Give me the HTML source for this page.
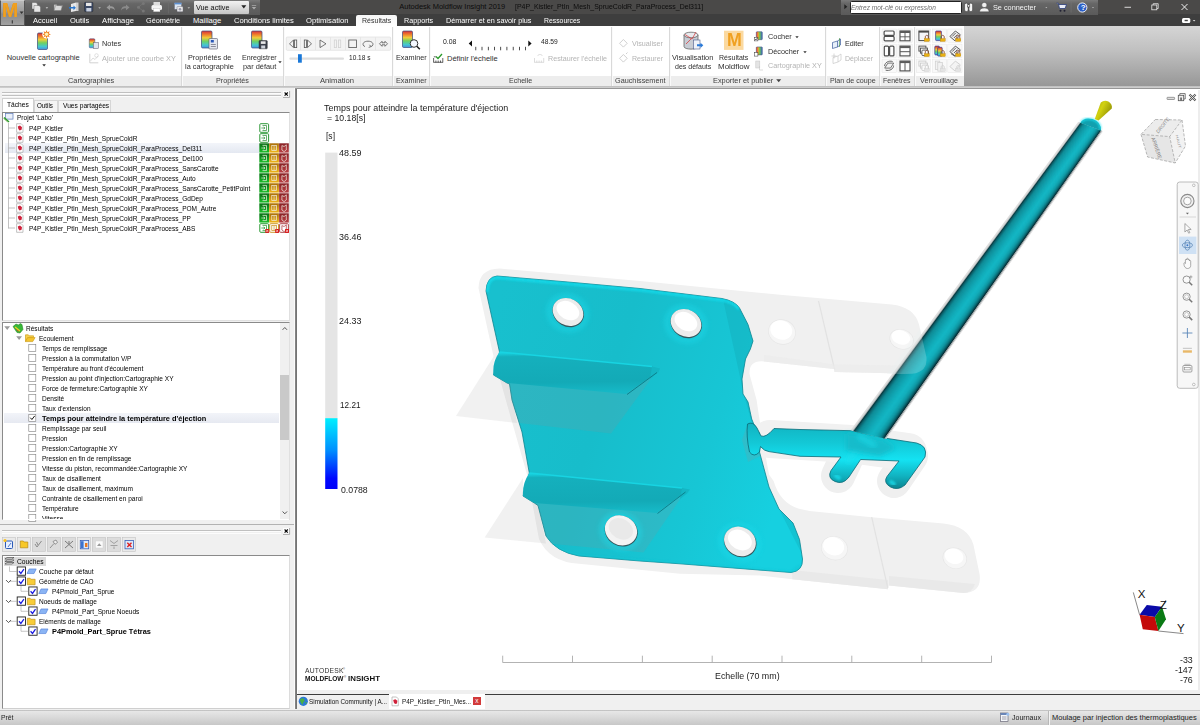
<!DOCTYPE html>
<html lang="fr"><head><meta charset="utf-8"><title>Autodesk Moldflow Insight 2019</title>
<style>
html,body{margin:0;padding:0;}
body{width:1200px;height:725px;overflow:hidden;position:relative;background:#f0f0f0;font-family:"Liberation Sans",sans-serif;}
.t{position:absolute;white-space:nowrap;line-height:1;transform-origin:0 50%;display:block;}
.r{position:absolute;}
svg{position:absolute;overflow:visible;}
</style></head><body>
<div class="r" style="left:0px;top:0px;width:1200px;height:15px;background:#4a4948;"></div>
<div class="r" style="left:0px;top:14.3px;width:1200px;height:11.4px;background:#3e3e3e;"></div>
<div class="r" style="left:25px;top:0px;width:235px;height:14.5px;background:linear-gradient(#7a7a7a,#666 25%,#5a5a5a);"></div>
<div class="r" style="left:0px;top:0px;width:25px;height:26px;background:linear-gradient(#b9b9b9,#9a9a9a 45%,#8a8a8a 55%,#a2a2a2);box-sizing:border-box;border:1px solid #555;border-top-color:#ccc;"></div>
<svg style="left:0;top:0" width="26" height="26" viewBox="0 0 26 26"><path d="M19.6 11.6 h4 l-2 2.4z" fill="#333"/><rect x="11.8" y="20.3" width=".9" height="3.2" fill="#222"/></svg>
<span class="t" style="left:2.30px;top:0.05px;font-size:20.5px;color:#f0a020;font-weight:bold;transform:scaleX(0.949);text-shadow:0 0 .6px #d88610;">M</span>
<svg style="left:0;top:0" width="300" height="15" viewBox="0 0 300 15"><g fill="#e6e6e6" stroke="#555" stroke-width=".4"><path d="M32 2.5h4l1.5 1.5v5h-5.5z"/><path d="M34 5.5h5l1.5 1.5v5h-6.5z"/></g><path d="M45.6 7.2h2.6l-1.3 1.5z" fill="#ccc"/><path d="M54 10.5l1.5-5h7l-1.5 5z M54 10.5v-6h2.5l.8 1h4v1" fill="#d8d8d8" stroke="#777" stroke-width=".5"/><path d="M71 4l5-1.5v8.5l-5 1z" fill="#e8e8e8"/><path d="M76 2.5h2.5v8.5h-2.5z" fill="#cfcfcf"/><path d="M69 7h4.5v-1.6l2.4 2.4-2.4 2.4v-1.6h-4.500z" fill="#2a78d0"/><rect x="84.500" y="2.3" width="8.5" height="9.4" rx="1" fill="#3c4a66" stroke="#222" stroke-width=".4"/><rect x="86" y="2.800" width="5.5" height="3.2" fill="#e8e8e8"/><rect x="86.300" y="8" width="5" height="3.500" fill="#c8d0e0"/><path d="M98.300 7.200h2.600l-1.300 1.500z" fill="#bbb"/><path d="M106.500 7.500l3.500-3v1.800c3.500 0 4.800 1.500 4.800 4.200c-1-1.800-2.300-2.200-4.800-2.200v1.900z" fill="#9a9a9a"/><path d="M129.500 7.500l-3.500-3v1.800c-3.500 0-4.800 1.500-4.800 4.200c1-1.800 2.300-2.200 4.800-2.200v1.900z" fill="#8a8a8a"/><g fill="#777"><circle cx="143.300" cy="3.500" r="1.500"/><circle cx="138.500" cy="7.300" r="1.500"/><circle cx="143.300" cy="11" r="1.500"/><path d="M143.300 3.200l-5 4 5 4" fill="none" stroke="#777" stroke-width=".7"/></g><rect x="151.500" y="5" width="10.500" height="5" rx="1.500" fill="#f4f4f4"/><rect x="153.500" y="2" width="6.500" height="3.500" fill="#ddd"/><rect x="153.500" y="8.500" width="6.500" height="3.200" fill="#fff" stroke="#aaa" stroke-width=".3"/><rect x="168" y="1" width=".6" height="12.500" fill="#6e6e6e"/><rect x="174.500" y="2.800" width="7" height="6.500" fill="#dce6f2" stroke="#667" stroke-width=".4"/><rect x="174.500" y="2.800" width="7" height="1.600" fill="#5b8fd0"/><rect x="177" y="6.500" width="6" height="5.200" rx=".8" fill="#e8e8e8" stroke="#667" stroke-width=".4"/><circle cx="180" cy="9.300" r="1.300" fill="#99a"/><path d="M187.500 7.200h2.600l-1.300 1.500z" fill="#bbb"/><path d="M251.800 5.200h4.400v.9h-4.400z M251.800 7h4.400l-2.200 2.400z" fill="#aaa"/></svg>
<div class="r" style="left:193.5px;top:1px;width:55.5px;height:12.5px;background:linear-gradient(#f2f2f2,#dcdcdc 50%,#c4c4c4);border-radius:1px;"></div>
<span class="t" style="left:195.50px;top:3.75px;font-size:7.5px;color:#111;transform:scaleX(0.964);">Vue active</span>
<svg style="left:241px;top:5px" width="6" height="4"><path d="M.3 .3h5l-2.500 3.200z" fill="#222"/></svg>
<span class="t" style="left:399.30px;top:3.25px;font-size:7.5px;color:#0c0c0c;">Autodesk Moldflow Insight 2019</span>
<span class="t" style="left:514.50px;top:3.25px;font-size:7.5px;color:#0c0c0c;transform:scaleX(0.927);">[P4P_Kistler_PtIn_Mesh_SprueColdR_ParaProcess_Del311]</span>
<div class="r" style="left:841px;top:0px;width:257px;height:14.5px;background:linear-gradient(#7a7a7a,#666 25%,#5a5a5a);"></div>
<svg style="left:844px;top:4px" width="4" height="6"><path d="M.3 .3l3 2.500l-3 2.500z" fill="#222"/></svg>
<div class="r" style="left:849.5px;top:0.5px;width:112px;height:13.5px;background:#fff;border-radius:1.5px;box-sizing:border-box;border:.6px solid #222;"></div>
<span class="t" style="left:851.30px;top:3.91px;font-size:7.2px;color:#6e6e6e;font-style:italic;transform:scaleX(0.912);">Entrez mot-clé ou expression</span>
<svg style="left:960px;top:0" width="140" height="15" viewBox="0 0 140 15"><g fill="#f4f4f4" stroke="#2a2a2a" stroke-width=".5"><rect x="4.600" y="3.200" width="3.600" height="8.300" rx="1.500"/><rect x="9" y="3.200" width="3.600" height="8.300" rx="1.500"/><rect x="7.400" y="4.800" width="2.400" height="2.200"/></g><g fill="#f0f0f0" stroke="#333" stroke-width=".4"><circle cx="24.300" cy="5" r="2.600"/><path d="M19.500 11.800c.3-3 2-3.800 4.800-3.800s4.500.8 4.800 3.800z"/></g><path d="M85.300 7h2l-1 1.200z" fill="#bbb"/><path d="M96.500 3.200h1.800l1.200 5.300h5.600l1.400-4h-7.600" fill="#e8ecf6" stroke="#2a3c7a" stroke-width=".8"/><circle cx="100.500" cy="10.800" r="1" fill="#223"/><circle cx="104.500" cy="10.800" r="1" fill="#223"/><rect x="110.800" y="2" width=".5" height="10.500" fill="#777"/><circle cx="122.300" cy="7.500" r="4.600" fill="#2a5fc8" stroke="#fff" stroke-width=".9"/><path d="M132 7h2l-1 1.200z" fill="#bbb"/></svg>
<span class="t" style="left:1080.80px;top:3.83px;font-size:8px;color:#fff;font-weight:bold;">?</span>
<span class="t" style="left:992.50px;top:3.65px;font-size:7.5px;color:#f4f4f4;transform:scaleX(0.973);">Se connecter</span>
<svg style="left:1100px;top:0" width="100" height="15" viewBox="0 0 100 15"><rect x="24.500" y="6.800" width="6.500" height=".9" fill="#e8e8e8"/><rect x="51.800" y="5" width="5" height="4.800" fill="none" stroke="#e8e8e8" stroke-width=".8"/><path d="M53.200 5v-1.300h5v4.800h-1.300" fill="none" stroke="#e8e8e8" stroke-width=".8"/><path d="M81.500 4l6 6m0-6l-6 6" stroke="#f0f0f0" stroke-width="1"/></svg>
<div class="r" style="left:356.3px;top:15px;width:41px;height:11.5px;background:linear-gradient(#f6f6f6,#fff);border-radius:2px 2px 0 0;"></div>
<span class="t" style="left:33.30px;top:16.77px;font-size:7.6px;color:#fff;transform:scaleX(0.988);">Accueil</span>
<span class="t" style="left:70.00px;top:16.77px;font-size:7.6px;color:#fff;transform:scaleX(0.993);">Outils</span>
<span class="t" style="left:101.80px;top:16.77px;font-size:7.6px;color:#fff;transform:scaleX(1.014);">Affichage</span>
<span class="t" style="left:146.30px;top:16.77px;font-size:7.6px;color:#fff;transform:scaleX(0.964);">Géométrie</span>
<span class="t" style="left:193.00px;top:16.77px;font-size:7.6px;color:#fff;">Maillage</span>
<span class="t" style="left:233.80px;top:16.77px;font-size:7.6px;color:#fff;transform:scaleX(1.007);">Conditions limites</span>
<span class="t" style="left:306.30px;top:16.77px;font-size:7.6px;color:#fff;transform:scaleX(1.006);">Optimisation</span>
<span class="t" style="left:362.00px;top:16.77px;font-size:7.6px;color:#333;transform:scaleX(0.925);">Résultats</span>
<span class="t" style="left:403.80px;top:16.77px;font-size:7.6px;color:#fff;transform:scaleX(0.947);">Rapports</span>
<span class="t" style="left:445.80px;top:16.77px;font-size:7.6px;color:#fff;transform:scaleX(0.955);">Démarrer et en savoir plus</span>
<span class="t" style="left:543.80px;top:16.77px;font-size:7.6px;color:#fff;transform:scaleX(0.902);">Ressources</span>
<svg style="left:1180px;top:17px" width="20" height="8" viewBox="0 0 20 8"><rect x="2" y="1.100" width="8.300" height="4.800" rx="1.500" fill="#fff"/><rect x="4.600" y="2.800" width="3.200" height="1.400" fill="#444"/><path d="M12.800 3h2.600l-1.300 1.500z" fill="#ddd"/></svg>
<div class="r" style="left:0px;top:26px;width:964px;height:49.5px;background:#fff;"></div>
<div class="r" style="left:0px;top:75.5px;width:964px;height:10.5px;background:#ededed;"></div>
<div class="r" style="left:964px;top:26px;width:236px;height:60.5px;background:linear-gradient(#d5d5d5,#c0c0c0 40%,#969696);"></div>
<div class="r" style="left:0px;top:86px;width:1200px;height:1.8px;background:linear-gradient(#bcbcbc,#d2d2d2);"></div>
<div class="r" style="left:180.5px;top:27px;width:1px;height:59px;background:#d9d9d9;"></div>
<div class="r" style="left:181.5px;top:27px;width:1px;height:59px;background:#fafafa;"></div>
<div class="r" style="left:283.1px;top:27px;width:1px;height:59px;background:#d9d9d9;"></div>
<div class="r" style="left:284.1px;top:27px;width:1px;height:59px;background:#fafafa;"></div>
<div class="r" style="left:391.8px;top:27px;width:1px;height:59px;background:#d9d9d9;"></div>
<div class="r" style="left:392.8px;top:27px;width:1px;height:59px;background:#fafafa;"></div>
<div class="r" style="left:428.5px;top:27px;width:1px;height:59px;background:#d9d9d9;"></div>
<div class="r" style="left:429.5px;top:27px;width:1px;height:59px;background:#fafafa;"></div>
<div class="r" style="left:611.3px;top:27px;width:1px;height:59px;background:#d9d9d9;"></div>
<div class="r" style="left:612.3px;top:27px;width:1px;height:59px;background:#fafafa;"></div>
<div class="r" style="left:668.7px;top:27px;width:1px;height:59px;background:#d9d9d9;"></div>
<div class="r" style="left:669.7px;top:27px;width:1px;height:59px;background:#fafafa;"></div>
<div class="r" style="left:824.8px;top:27px;width:1px;height:59px;background:#d9d9d9;"></div>
<div class="r" style="left:825.8px;top:27px;width:1px;height:59px;background:#fafafa;"></div>
<div class="r" style="left:878.5px;top:27px;width:1px;height:59px;background:#d9d9d9;"></div>
<div class="r" style="left:879.5px;top:27px;width:1px;height:59px;background:#fafafa;"></div>
<div class="r" style="left:913.6px;top:27px;width:1px;height:59px;background:#d9d9d9;"></div>
<div class="r" style="left:914.6px;top:27px;width:1px;height:59px;background:#fafafa;"></div>
<span class="t" style="left:67.50px;top:76.65px;font-size:7.5px;color:#404040;transform:scaleX(0.983);">Cartographies</span>
<span class="t" style="left:215.80px;top:76.65px;font-size:7.5px;color:#404040;transform:scaleX(0.962);">Propriétés</span>
<span class="t" style="left:320.40px;top:76.65px;font-size:7.5px;color:#404040;transform:scaleX(1.019);">Animation</span>
<span class="t" style="left:395.60px;top:76.65px;font-size:7.5px;color:#404040;transform:scaleX(0.972);">Examiner</span>
<span class="t" style="left:508.80px;top:76.65px;font-size:7.5px;color:#404040;transform:scaleX(0.943);">Echelle</span>
<span class="t" style="left:615.00px;top:76.65px;font-size:7.5px;color:#404040;transform:scaleX(0.969);">Gauchissement</span>
<span class="t" style="left:712.50px;top:76.65px;font-size:7.5px;color:#404040;transform:scaleX(0.984);">Exporter et publier</span>
<span class="t" style="left:829.90px;top:76.65px;font-size:7.5px;color:#404040;transform:scaleX(0.951);">Plan de coupe</span>
<span class="t" style="left:883.20px;top:76.65px;font-size:7.5px;color:#404040;transform:scaleX(0.929);">Fenêtres</span>
<span class="t" style="left:920.00px;top:76.65px;font-size:7.5px;color:#404040;transform:scaleX(0.957);">Verrouillage</span>
<svg style="left:776px;top:79px" width="6" height="4"><path d="M.2 .3h5l-2.500 2.900z" fill="#444"/></svg>
<span class="t" style="left:6.70px;top:53.85px;font-size:7.5px;color:#303030;">Nouvelle cartographie</span>
<svg style="left:41.500px;top:63.500px" width="5" height="3"><path d="M.3 .2h3.600l-1.800 2.200z" fill="#333"/></svg>
<span class="t" style="left:102.00px;top:40.05px;font-size:7.5px;color:#303030;transform:scaleX(0.980);">Notes</span>
<span class="t" style="left:102.00px;top:54.95px;font-size:7.5px;color:#b4b4b4;transform:scaleX(0.978);">Ajouter une courbe XY</span>
<span class="t" style="left:187.60px;top:53.85px;font-size:7.5px;color:#303030;transform:scaleX(0.971);">Propriétés de</span>
<span class="t" style="left:184.80px;top:63.05px;font-size:7.5px;color:#303030;transform:scaleX(0.982);">la cartographie</span>
<span class="t" style="left:242.20px;top:53.85px;font-size:7.5px;color:#303030;transform:scaleX(0.946);">Enregistrer</span>
<span class="t" style="left:242.80px;top:63.05px;font-size:7.5px;color:#303030;transform:scaleX(0.983);">par défaut</span>
<svg style="left:278px;top:60.500px" width="5" height="3"><path d="M.3 .2h3.400l-1.700 2.100z" fill="#333"/></svg>
<span class="t" style="left:348.60px;top:53.85px;font-size:7.5px;color:#222;transform:scaleX(0.870);">10.18 s</span>
<span class="t" style="left:395.60px;top:53.85px;font-size:7.5px;color:#303030;transform:scaleX(0.972);">Examiner</span>
<span class="t" style="left:442.80px;top:38.15px;font-size:7.5px;color:#222;transform:scaleX(0.918);">0.08</span>
<span class="t" style="left:541.30px;top:38.15px;font-size:7.5px;color:#222;transform:scaleX(0.890);">48.59</span>
<span class="t" style="left:447.00px;top:54.95px;font-size:7.5px;color:#303030;">Définir l'échelle</span>
<span class="t" style="left:547.80px;top:54.95px;font-size:7.5px;color:#b4b4b4;transform:scaleX(0.953);">Restaurer l'échelle</span>
<span class="t" style="left:631.70px;top:40.15px;font-size:7.5px;color:#b4b4b4;transform:scaleX(0.957);">Visualiser</span>
<span class="t" style="left:631.70px;top:54.95px;font-size:7.5px;color:#b4b4b4;transform:scaleX(0.941);">Restaurer</span>
<span class="t" style="left:672.00px;top:53.85px;font-size:7.5px;color:#303030;transform:scaleX(0.984);">Visualisation</span>
<span class="t" style="left:675.20px;top:63.05px;font-size:7.5px;color:#303030;transform:scaleX(0.936);">des défauts</span>
<span class="t" style="left:718.80px;top:53.85px;font-size:7.5px;color:#303030;transform:scaleX(0.937);">Résultats</span>
<span class="t" style="left:717.90px;top:63.05px;font-size:7.5px;color:#303030;transform:scaleX(1.061);">Moldflow</span>
<span class="t" style="left:767.50px;top:33.15px;font-size:7.5px;color:#303030;transform:scaleX(0.980);">Cocher</span>
<span class="t" style="left:767.50px;top:48.35px;font-size:7.5px;color:#303030;transform:scaleX(0.972);">Décocher</span>
<span class="t" style="left:767.50px;top:62.45px;font-size:7.5px;color:#b4b4b4;transform:scaleX(0.970);">Cartographie XY</span>
<svg style="left:795px;top:35.500px" width="5" height="3"><path d="M.3 .2h3.400l-1.700 2.100z" fill="#333"/></svg>
<svg style="left:802.500px;top:50.700px" width="5" height="3"><path d="M.3 .2h3.400l-1.700 2.100z" fill="#333"/></svg>
<span class="t" style="left:845.30px;top:39.85px;font-size:7.5px;color:#303030;transform:scaleX(0.954);">Editer</span>
<span class="t" style="left:845.30px;top:54.95px;font-size:7.5px;color:#b4b4b4;transform:scaleX(0.933);">Déplacer</span>
<svg style="left:0;top:26px" width="964" height="50" viewBox="0 26 964 50"><defs><linearGradient id="rb" x1="0" y1="0" x2="0" y2="1"><stop offset="0" stop-color="#d8303c"/><stop offset=".2" stop-color="#ee7a2a"/><stop offset=".4" stop-color="#f0cc3c"/><stop offset=".6" stop-color="#70d060"/><stop offset=".82" stop-color="#44c8d0"/><stop offset="1" stop-color="#4a8ee0"/></linearGradient><linearGradient id="rbh" x1="0" y1="0" x2="1" y2="0"><stop offset="0" stop-color="#d8283c"/><stop offset=".3" stop-color="#f4a030"/><stop offset=".55" stop-color="#70c850"/><stop offset="1" stop-color="#3a62c8"/></linearGradient></defs><rect x="37.500" y="33" width="10" height="16.500" rx="1.200" fill="url(#rb)" stroke="#3a4a7a" stroke-width=".7"/><circle cx="46.600" cy="34.300" r="4.300" fill="#fff"/><path d="M46.60 30.00 L47.44 32.27 L49.64 31.26 L48.63 33.46 L50.90 34.30 L48.63 35.14 L49.64 37.34 L47.44 36.33 L46.60 38.60 L45.76 36.33 L43.56 37.34 L44.57 35.14 L42.30 34.30 L44.57 33.46 L43.56 31.26 L45.76 32.27Z" fill="#f07a14"/><circle cx="46.600" cy="34.300" r="1.700" fill="#fff4b8"/><rect x="89.300" y="38.800" width="5.500" height="9" rx=".8" fill="url(#rb)" stroke="#3a4a7a" stroke-width=".5"/><rect x="93.300" y="42.500" width="5" height="6" fill="#dde3ee" stroke="#556" stroke-width=".5"/><path d="M89.800 53.800v9h8.500" fill="none" stroke="#c8c8c8" stroke-width=".8"/><path d="M90.500 61l2.500-3 2 1.500 3-3.500" fill="none" stroke="#d0d0d0" stroke-width=".7"/><circle cx="96.500" cy="55.500" r="1.800" fill="none" stroke="#ccc" stroke-width=".6"/><rect x="201.500" y="31" width="10.500" height="17" rx="1.200" fill="url(#rb)" stroke="#3a4a7a" stroke-width=".7"/><rect x="209" y="38.500" width="8.500" height="10.500" rx=".8" fill="#e4e8f0" stroke="#556" stroke-width=".6"/><rect x="210.800" y="40" width="3" height="2.500" fill="#2a58b8"/><rect x="210.800" y="44" width="5" height=".7" fill="#667"/><rect x="210.800" y="46" width="5" height=".7" fill="#667"/><rect x="251.500" y="31" width="10.500" height="17" rx="1.200" fill="url(#rb)" stroke="#3a4a7a" stroke-width=".7"/><rect x="259" y="40.500" width="8.300" height="8.300" rx=".8" fill="#3a3f4a" stroke="#222" stroke-width=".4"/><rect x="260.800" y="41.300" width="4.800" height="2.600" fill="#e8e8e8"/><rect x="261.200" y="45.500" width="4" height="3" fill="#cfd4dc"/><rect x="286.200" y="37" width="104.500" height="13.300" rx="1" fill="#f3f3f3" stroke="#dcdcdc" stroke-width=".6"/><rect x="300.4" y="37.300" width=".6" height="12.700" fill="#dedede"/><rect x="315.2" y="37.300" width=".6" height="12.700" fill="#dedede"/><rect x="330" y="37.300" width=".6" height="12.700" fill="#dedede"/><rect x="345" y="37.300" width=".6" height="12.700" fill="#dedede"/><rect x="360.2" y="37.300" width=".6" height="12.700" fill="#dedede"/><rect x="375.4" y="37.300" width=".6" height="12.700" fill="#dedede"/><g fill="none" stroke="#555" stroke-width=".8"><path d="M293.500 40l-4 3.800 4 3.800z"/><rect x="294.500" y="40" width="2.200" height="7.600"/><path d="M307.500 40l4 3.800-4 3.800z"/><rect x="304.300" y="40" width="2.200" height="7.600"/><path d="M320 40l6 3.800-6 3.800z"/><rect x="348.800" y="40" width="7.600" height="7.600"/><path d="M365 46.500c-3-.5-3-5.300 3-5.300s6 4.800 3 5.300 M369.500 44.800l1.500 1.800-2.300.8"/><path d="M379.500 43.800l2.500-2.500v1.500h3v-1.500l2.500 2.500-2.500 2.500v-1.500h-3v1.500z"/></g><g fill="none" stroke="#d2d2d2" stroke-width=".8"><rect x="334.300" y="40" width="2.200" height="7.600"/><rect x="338.500" y="40" width="2.200" height="7.600"/></g><rect x="289.400" y="57.400" width="54.600" height="2.400" rx="1" fill="#dedede"/><rect x="298" y="54.200" width="3.800" height="8.500" fill="#1a78d8"/><rect x="402.500" y="31" width="10" height="16.500" rx="1.200" fill="url(#rb)" stroke="#3a4a7a" stroke-width=".7"/><circle cx="414" cy="43.500" r="3.800" fill="#f4f8ff" stroke="#333" stroke-width="1"/><path d="M416.800 46.300l3 3" stroke="#222" stroke-width="1.600"/><path d="M472 40.500v6l-3.300-3z M528.300 40.500v6l3.300-3z" fill="#111"/><rect x="475.4" y="46.800" width=".8" height="3.500" fill="#222"/><rect x="481.6" y="46.800" width=".8" height="3.500" fill="#222"/><rect x="487.9" y="46.800" width=".8" height="3.500" fill="#222"/><rect x="494.1" y="46.800" width=".8" height="3.500" fill="#222"/><rect x="500.3" y="46.800" width=".8" height="3.500" fill="#222"/><rect x="506.5" y="46.800" width=".8" height="3.500" fill="#222"/><rect x="512.8" y="46.800" width=".8" height="3.500" fill="#222"/><rect x="519.0" y="46.800" width=".8" height="3.500" fill="#222"/><rect x="525.2" y="46.800" width=".8" height="3.500" fill="#222"/><path d="M433.600 62.500v-4.500m2.300 4.500v-2m2.300 2v-2m2.300 2v-2m2.300 2v-4.500 M433.600 62.300h9.300" stroke="#222" stroke-width=".7" fill="none"/><path d="M436 56.500l2 2 4-4.500" stroke="#2a9a2a" stroke-width="1.300" fill="none"/><path d="M433.800 56.800h2" stroke="#222" stroke-width=".7"/><path d="M534.500 62.500v-4.500m2.300 4.500v-2m2.300 2v-2m2.300 2v-2m2.300 2v-4.500 M534.500 62.300h9.300 M537.500 56c1-2 4-2 5 0" stroke="#cfcfcf" stroke-width=".7" fill="none"/><path d="M623.400 39.500l3.800 3.800-3.800 3.800-3.800-3.800z M623.400 54.500l3.800 3.800-3.800 3.800-3.800-3.800z M626 54l1.500-1.500" fill="none" stroke="#c4c4c4" stroke-width=".8"/><path d="M684 35v11.500c0 3.500 14 3.500 14 0v-11.500" fill="#c8ccd4" stroke="#555" stroke-width=".7"/><ellipse cx="691" cy="35" rx="7" ry="2.800" fill="#e8eaee" stroke="#555" stroke-width=".7"/><path d="M685 34.500l7 4.500 4-7 M686 44l5-5" fill="none" stroke="#d83030" stroke-width=".7"/><rect x="693.500" y="40" width="6.500" height="9" fill="#eef2fa" stroke="#4a5a8a" stroke-width=".6"/><path d="M697 44.300h3.500v-1.600l2.800 2.600-2.800 2.600v-1.600h-3.500z" fill="#2a7ad8"/><rect x="724" y="30.700" width="19.500" height="19.200" fill="#fbd9a0"/><rect x="756.300" y="31.700" width="6" height="8" rx=".7" fill="url(#rbh)" stroke="#3a4a7a" stroke-width=".5"/><rect x="754.300" y="37.300" width="3.600" height="3.600" fill="#fff" stroke="#333" stroke-width=".5"/><path d="M754.900 39l1 1 1.700-2.200" stroke="#222" stroke-width=".7" fill="none"/><rect x="756.300" y="46.900" width="6" height="8" rx=".7" fill="url(#rbh)" stroke="#3a4a7a" stroke-width=".5"/><rect x="754.300" y="52.500" width="3.600" height="3.600" fill="#fff" stroke="#333" stroke-width=".5"/><rect x="755.800" y="61" width="4" height="7" fill="#e4e4e4" stroke="#c4c4c4" stroke-width=".5"/><path d="M759.500 66v4h3.500" stroke="#c8c8c8" stroke-width=".6" fill="none"/><path d="M832.500 42.500l5-1.500v6l-5 1.500z M837.500 41l3-2v6l-3 2" fill="#e8f0fa" stroke="#3a5a9a" stroke-width=".7"/><path d="M839.500 38v9" stroke="#3a8a3a" stroke-width=".6"/><path d="M833 57.500l5-1.500v6l-5 1.500z M838 56l3-2v6l-3 2 M834 53.500v5m-2.500-2.500h5" fill="none" stroke="#c8c8c8" stroke-width=".7"/></svg>
<span class="t" style="left:726.80px;top:31.80px;font-size:17.6px;color:#f0a020;font-weight:bold;transform:scaleX(1.009);">M</span>
<svg style="left:0;top:26px" width="964" height="50" viewBox="0 26 964 50"><rect x="882" y="29" width="14.300" height="13.2" fill="#f9f9f9" stroke="#e4e4e4" stroke-width=".5"/><rect x="884.1" y="31" width="10" height="4.400" rx="1" fill="#fdfdfd" stroke="#4c4c4c" stroke-width="1.200"/><rect x="884.1" y="36.4" width="10" height="4.400" rx="1" fill="#fdfdfd" stroke="#4c4c4c" stroke-width="1.200"/><rect x="882" y="44.1" width="14.300" height="13.2" fill="#f9f9f9" stroke="#e4e4e4" stroke-width=".5"/><rect x="884.3000000000001" y="46.1" width="4.300" height="9.8" rx="1" fill="#fdfdfd" stroke="#4c4c4c" stroke-width="1.200"/><rect x="889.6" y="46.1" width="4.300" height="9.8" rx="1" fill="#fdfdfd" stroke="#4c4c4c" stroke-width="1.200"/><rect x="882" y="59.1" width="14.300" height="13.2" fill="#f9f9f9" stroke="#e4e4e4" stroke-width=".5"/><path d="M884.7 68.1l3.200-5h5.800l-3.200 5z" fill="#f2f2f2" stroke="#666" stroke-width=".9"/><path d="M885.6 70.1c3.800 1.200 8-1 8-4.600 M892.6 61.5c-3.800-1.200-8 1-8 4.600" fill="none" stroke="#666" stroke-width="1"/><rect x="897.9" y="29" width="14.300" height="13.2" fill="#f9f9f9" stroke="#e4e4e4" stroke-width=".5"/><rect x="900.0" y="31" width="10" height="9.8" fill="#fcfcfc" stroke="#4a4a4a" stroke-width="1.100"/><rect x="900.0" y="31" width="10" height="2" fill="#5a5a5a"/><path d="M900.0 36.8h10 M905.0 33v7.800000000000001" stroke="#555" stroke-width=".9"/><rect x="897.9" y="44.1" width="14.300" height="13.2" fill="#f9f9f9" stroke="#e4e4e4" stroke-width=".5"/><rect x="900.0" y="46.1" width="10" height="9.8" fill="#fcfcfc" stroke="#4a4a4a" stroke-width="1.100"/><rect x="900.0" y="46.1" width="10" height="2" fill="#5a5a5a"/><path d="M900.0 51.7h10" stroke="#555" stroke-width="1"/><rect x="897.9" y="59.1" width="14.300" height="13.2" fill="#f9f9f9" stroke="#e4e4e4" stroke-width=".5"/><rect x="900.0" y="61.1" width="10" height="9.8" fill="#fcfcfc" stroke="#4a4a4a" stroke-width="1.100"/><rect x="900.0" y="61.1" width="10" height="2" fill="#5a5a5a"/><path d="M905.0 63.1v7.800000000000001" stroke="#555" stroke-width="1"/><rect x="916.3" y="29" width="14.200" height="13.2" fill="#f9f9f9" stroke="#e4e4e4" stroke-width=".5"/><rect x="918.9" y="31" width="9.800" height="9.600" fill="#f4f6fa" stroke="#4a4a4a" stroke-width="1"/><rect x="918.9" y="31" width="9.800" height="1.600" fill="#4a4a4a"/><path d="M925.3 38.6v-1.600c0-2.200 3-2.200 3 0v1.600" fill="none" stroke="#8a4a30" stroke-width=".9"/><rect x="924.3" y="38.6" width="5" height="2.800" fill="#e8b010" stroke="#b88008" stroke-width=".4"/><rect x="916.3" y="44.1" width="14.200" height="13.2" fill="#f9f9f9" stroke="#e4e4e4" stroke-width=".5"/><rect x="918.9" y="46.1" width="7" height="5" fill="#fafafa" stroke="#4a4a4a" stroke-width=".9"/><rect x="920.4" y="48.1" width="7" height="5" fill="#fafafa" stroke="#4a4a4a" stroke-width=".9"/><rect x="921.9" y="50.1" width="6.500" height="5.500" rx="1" fill="#fafafa" stroke="#4a4a4a" stroke-width=".9"/><path d="M925.3 53.7v-1.600c0-2.200 3-2.200 3 0v1.600" fill="none" stroke="#8a4a30" stroke-width=".9"/><rect x="924.3" y="53.7" width="5" height="2.800" fill="#e8b010" stroke="#b88008" stroke-width=".4"/><rect x="916.3" y="59.1" width="14.200" height="13.2" fill="#f9f9f9" stroke="#e4e4e4" stroke-width=".5"/><rect x="918.9" y="61.1" width="7" height="5" fill="#fafafa" stroke="#cdcdcd" stroke-width=".9"/><rect x="920.4" y="63.1" width="7" height="5" fill="#fafafa" stroke="#cdcdcd" stroke-width=".9"/><rect x="921.9" y="65.1" width="6.500" height="5.500" rx="1" fill="#fafafa" stroke="#cdcdcd" stroke-width=".9"/><path d="M925.3 68.7v-1.600c0-2.200 3-2.200 3 0v1.600" fill="none" stroke="#cfcfcf" stroke-width=".9"/><rect x="924.3" y="68.7" width="5" height="2.800" fill="#e4e4e4" stroke="#d0d0d0" stroke-width=".4"/><rect x="932.2" y="29" width="14.200" height="13.2" fill="#f9f9f9" stroke="#e4e4e4" stroke-width=".5"/><rect x="935.6" y="31" width="5.800" height="9.600" rx=".8" fill="url(#rb)" stroke="#3a3a8a" stroke-width=".7"/><path d="M941.2 38.6v-1.600c0-2.200 3-2.200 3 0v1.600" fill="none" stroke="#8a4a30" stroke-width=".9"/><rect x="940.2" y="38.6" width="5" height="2.800" fill="#e8b010" stroke="#b88008" stroke-width=".4"/><rect x="932.2" y="44.1" width="14.200" height="13.2" fill="#f9f9f9" stroke="#e4e4e4" stroke-width=".5"/><rect x="934.8000000000001" y="46.1" width="4.600" height="8.800" rx=".8" fill="url(#rb)" stroke="#3a3a8a" stroke-width=".7"/><rect x="937.6" y="47.300000000000004" width="4.600" height="8.800" rx=".8" fill="url(#rb)" stroke="#3a3a8a" stroke-width=".7"/><path d="M941.2 53.7v-1.600c0-2.200 3-2.200 3 0v1.600" fill="none" stroke="#8a4a30" stroke-width=".9"/><rect x="940.2" y="53.7" width="5" height="2.800" fill="#e8b010" stroke="#b88008" stroke-width=".4"/><rect x="932.2" y="59.1" width="14.200" height="13.2" fill="#f9f9f9" stroke="#e4e4e4" stroke-width=".5"/><rect x="935.3000000000001" y="61.1" width="4.500" height="8.500" fill="#f2f2f2" stroke="#cdcdcd" stroke-width=".7"/><rect x="937.8000000000001" y="62.6" width="4.500" height="8.500" fill="#f2f2f2" stroke="#cdcdcd" stroke-width=".7"/><path d="M941.2 68.7v-1.600c0-2.200 3-2.200 3 0v1.600" fill="none" stroke="#cfcfcf" stroke-width=".9"/><rect x="940.2" y="68.7" width="5" height="2.800" fill="#e4e4e4" stroke="#d0d0d0" stroke-width=".4"/><rect x="947.8" y="29" width="14.200" height="13.2" fill="#f9f9f9" stroke="#e4e4e4" stroke-width=".5"/><path d="M949.9 36.5l5.500-5.500 5 3.800-5.500 6z" fill="#eeeeee" stroke="#4a4a4a" stroke-width=".9"/><path d="M952.1999999999999 36.5l3.500-3.500 M953.9 38l3.500-3.500" fill="none" stroke="#555" stroke-width=".9"/><path d="M956.8 38.6v-1.600c0-2.200 3-2.200 3 0v1.600" fill="none" stroke="#8a4a30" stroke-width=".9"/><rect x="955.8" y="38.6" width="5" height="2.800" fill="#e8b010" stroke="#b88008" stroke-width=".4"/><rect x="947.8" y="44.1" width="14.200" height="13.2" fill="#f9f9f9" stroke="#e4e4e4" stroke-width=".5"/><path d="M949.9 51.6l5.500-5.500 5 3.800-5.500 6z" fill="#eeeeee" stroke="#4a4a4a" stroke-width=".9"/><path d="M952.1999999999999 51.6l3.500-3.500 M953.9 53.1l3.500-3.500" fill="none" stroke="#555" stroke-width=".9"/><path d="M950.9 53.6l4.500 3" fill="none" stroke="#555" stroke-width=".9"/><path d="M956.8 53.7v-1.600c0-2.200 3-2.200 3 0v1.600" fill="none" stroke="#8a4a30" stroke-width=".9"/><rect x="955.8" y="53.7" width="5" height="2.800" fill="#e8b010" stroke="#b88008" stroke-width=".4"/><rect x="947.8" y="59.1" width="14.200" height="13.2" fill="#f9f9f9" stroke="#e4e4e4" stroke-width=".5"/><path d="M949.9 66.6l5.500-5.500 5 3.800-5.500 6z" fill="#f4f4f4" stroke="#cdcdcd" stroke-width=".9"/><path d="M956.8 68.7v-1.600c0-2.200 3-2.200 3 0v1.600" fill="none" stroke="#cfcfcf" stroke-width=".9"/><rect x="955.8" y="68.7" width="5" height="2.800" fill="#e4e4e4" stroke="#d0d0d0" stroke-width=".4"/></svg>
<div class="r" style="left:0px;top:87.6px;width:297px;height:623px;background:#f0f0f0;"></div>
<div class="r" style="left:294.7px;top:88px;width:2.3px;height:621px;background:linear-gradient(90deg,#8c8c8c,#6c6c6c);"></div>
<div class="r" style="left:293.6px;top:88px;width:1px;height:621px;background:#fbfbfb;"></div>
<div class="r" style="left:2px;top:92.2px;width:279px;height:0.9px;background:#c0c0c0;"></div>
<div class="r" style="left:2px;top:93.10000000000001px;width:279px;height:0.8px;background:#fcfcfc;"></div>
<div class="r" style="left:2px;top:95px;width:279px;height:0.9px;background:#c0c0c0;"></div>
<div class="r" style="left:2px;top:95.9px;width:279px;height:0.8px;background:#fcfcfc;"></div>
<svg style="left:282.500px;top:90.500px" width="7" height="7" viewBox="0 0 7 7"><rect x="0" y="0" width="6.600" height="6.400" fill="#fdfdfd"/><path d="M0 6.400h6.600v-6.400" fill="none" stroke="#8a8a8a" stroke-width=".7"/><path d="M1.600 1.500L4.800 4.700M4.800 1.500L1.600 4.700" stroke="#000" stroke-width="1.100" fill="none"/></svg>
<div class="r" style="left:34px;top:99.8px;width:23.5px;height:12.5px;background:#f4f4f4;box-sizing:border-box;border:.7px solid #d6d6d6;border-bottom:none;"></div>
<div class="r" style="left:58px;top:99.8px;width:52.8px;height:12.5px;background:#f4f4f4;box-sizing:border-box;border:.7px solid #d6d6d6;border-bottom:none;"></div>
<div class="r" style="left:2px;top:98.4px;width:32px;height:14.6px;background:#fff;box-sizing:border-box;border:.7px solid #cfcfcf;border-bottom:none;"></div>
<span class="t" style="left:6.90px;top:101.27px;font-size:7px;color:#000;transform:scaleX(0.950);">Tâches</span>
<span class="t" style="left:36.60px;top:102.17px;font-size:7px;color:#000;transform:scaleX(0.894);">Outils</span>
<span class="t" style="left:62.50px;top:102.17px;font-size:7px;color:#000;transform:scaleX(0.947);">Vues partagées</span>
<div class="r" style="left:1.8px;top:112.3px;width:288px;height:208.5px;background:#fff;box-sizing:border-box;border:1px solid #8a8a8a;border-right-color:#e0e0e0;border-bottom-color:#e0e0e0;"></div>
<svg style="left:3px;top:113px" width="12" height="10" viewBox="0 0 12 10"><rect x="2.500" y=".600" width="7.500" height="5.500" fill="#eaf0fa" stroke="#5a7ab8" stroke-width=".7"/><path d="M1 4.500l5 4.500" stroke="#2a9a2a" stroke-width="1.500"/><path d="M.5 5.500l4 3.500" stroke="#7a4" stroke-width=".6"/></svg>
<span class="t" style="left:16.60px;top:114.47px;font-size:7px;color:#000;transform:scaleX(0.935);">Projet 'Labo'</span>
<div class="r" style="left:5px;top:143.2px;width:253.5px;height:9.6px;background:linear-gradient(#f3f5fa,#e4e8f1);"></div>
<span class="t" style="left:28.75px;top:124.67px;font-size:7px;color:#000;transform:scaleX(0.935);">P4P_Kistler</span>
<span class="t" style="left:28.75px;top:134.67px;font-size:7px;color:#000;transform:scaleX(0.935);">P4P_Kistler_PtIn_Mesh_SprueColdR</span>
<span class="t" style="left:28.75px;top:144.67px;font-size:7px;color:#000;transform:scaleX(0.935);">P4P_Kistler_PtIn_Mesh_SprueColdR_ParaProcess_Del311</span>
<span class="t" style="left:28.75px;top:154.67px;font-size:7px;color:#000;transform:scaleX(0.935);">P4P_Kistler_PtIn_Mesh_SprueColdR_ParaProcess_Del100</span>
<span class="t" style="left:28.75px;top:164.67px;font-size:7px;color:#000;transform:scaleX(0.935);">P4P_Kistler_PtIn_Mesh_SprueColdR_ParaProcess_SansCarotte</span>
<span class="t" style="left:28.75px;top:174.67px;font-size:7px;color:#000;transform:scaleX(0.935);">P4P_Kistler_PtIn_Mesh_SprueColdR_ParaProcess_Auto</span>
<span class="t" style="left:28.75px;top:184.67px;font-size:7px;color:#000;transform:scaleX(0.935);">P4P_Kistler_PtIn_Mesh_SprueColdR_ParaProcess_SansCarotte_PetitPoint</span>
<span class="t" style="left:28.75px;top:194.67px;font-size:7px;color:#000;transform:scaleX(0.935);">P4P_Kistler_PtIn_Mesh_SprueColdR_ParaProcess_GdDep</span>
<span class="t" style="left:28.75px;top:204.67px;font-size:7px;color:#000;transform:scaleX(0.935);">P4P_Kistler_PtIn_Mesh_SprueColdR_ParaProcess_POM_Autre</span>
<span class="t" style="left:28.75px;top:214.67px;font-size:7px;color:#000;transform:scaleX(0.935);">P4P_Kistler_PtIn_Mesh_SprueColdR_ParaProcess_PP</span>
<span class="t" style="left:28.75px;top:224.67px;font-size:7px;color:#000;transform:scaleX(0.935);">P4P_Kistler_PtIn_Mesh_SprueColdR_ParaProcess_ABS</span>
<svg style="left:0;top:0" width="297" height="330" viewBox="0 0 297 330"><defs><linearGradient id="sg0" x1="0" y1="0" x2="0" y2="1"><stop offset="0" stop-color="#0b6e16"/><stop offset=".5" stop-color="#109420"/><stop offset="1" stop-color="#1cc028"/></linearGradient><linearGradient id="sg1" x1="0" y1="0" x2="0" y2="1"><stop offset="0" stop-color="#a86c08"/><stop offset=".5" stop-color="#cc9010"/><stop offset="1" stop-color="#f0b81c"/></linearGradient><linearGradient id="sg2" x1="0" y1="0" x2="0" y2="1"><stop offset="0" stop-color="#862024"/><stop offset=".5" stop-color="#a43236"/><stop offset="1" stop-color="#b84246"/></linearGradient></defs><path d="M8.500 123v105.500" stroke="#a8a8a8" stroke-width=".7" fill="none"/><path d="M8.500 128h6.500" stroke="#a8a8a8" stroke-width=".7"/><path d="M16.600 123.7h4.600l1.800 1.800v6.800h-6.400z" fill="#fff" stroke="#9a9a9a" stroke-width=".6"/><path d="M17.800 126.4l2.200-.8 2 1.600-.4 2.600-2 .6-1.200-1.400z" fill="#d0203a"/><rect x="259.8" y="123.7" width="8.800" height="8.600" rx="1" fill="#fff" stroke="#2f9a3a" stroke-width="1"/><path d="M262.5 125.5h4v5h-4 M261.3 128h3.500 M263.6 126.7l1.300 1.300-1.300 1.300" fill="none" stroke="#2a8a34" stroke-width=".7"/><path d="M8.500 138h6.500" stroke="#a8a8a8" stroke-width=".7"/><path d="M16.600 133.7h4.600l1.800 1.800v6.800h-6.400z" fill="#fff" stroke="#9a9a9a" stroke-width=".6"/><path d="M17.800 136.4l2.200-.8 2 1.600-.4 2.600-2 .6-1.200-1.400z" fill="#d0203a"/><rect x="259.8" y="133.7" width="8.800" height="8.600" rx="1" fill="#fff" stroke="#2f9a3a" stroke-width="1"/><path d="M262.5 135.5h4v5h-4 M261.3 138h3.500 M263.6 136.7l1.300 1.300-1.300 1.300" fill="none" stroke="#2a8a34" stroke-width=".7"/><path d="M8.500 148h6.500" stroke="#a8a8a8" stroke-width=".7"/><path d="M16.600 143.7h4.600l1.800 1.800v6.800h-6.400z" fill="#fff" stroke="#9a9a9a" stroke-width=".6"/><path d="M17.800 146.4l2.200-.8 2 1.600-.4 2.600-2 .6-1.200-1.400z" fill="#d0203a"/><rect x="259.3" y="143.3" width="9.700" height="9.300" fill="url(#sg0)"/><path d="M262.5 145.4h4v5.200h-4 M261.3 148h3.500 M263.6 146.7l1.300 1.300-1.300 1.300" fill="none" stroke="#f2f2e8" stroke-width=".7"/><rect x="269.2" y="143.3" width="9.700" height="9.300" fill="url(#sg1)"/><rect x="271.8" y="145.4" width="4.800" height="5.200" fill="none" stroke="#f2f2e8" stroke-width=".7"/><path d="M273.2 147h2.200 M273.2 149h2.200" stroke="#f2f2e8" stroke-width=".7"/><rect x="279.1" y="143.3" width="9.700" height="9.300" fill="url(#sg2)"/><path d="M281.90000000000003 145.6l2.200.9 2.200-1.700v5.200l-2.200 1.600-2.200-1.600z" fill="none" stroke="#f2f2e8" stroke-width=".7"/><path d="M8.500 158h6.500" stroke="#a8a8a8" stroke-width=".7"/><path d="M16.600 153.7h4.600l1.800 1.800v6.800h-6.400z" fill="#fff" stroke="#9a9a9a" stroke-width=".6"/><path d="M17.800 156.4l2.200-.8 2 1.600-.4 2.600-2 .6-1.200-1.400z" fill="#d0203a"/><rect x="259.3" y="153.3" width="9.700" height="9.300" fill="url(#sg0)"/><path d="M262.5 155.4h4v5.200h-4 M261.3 158h3.500 M263.6 156.7l1.300 1.300-1.300 1.300" fill="none" stroke="#f2f2e8" stroke-width=".7"/><rect x="269.2" y="153.3" width="9.700" height="9.300" fill="url(#sg1)"/><rect x="271.8" y="155.4" width="4.800" height="5.200" fill="none" stroke="#f2f2e8" stroke-width=".7"/><path d="M273.2 157h2.200 M273.2 159h2.200" stroke="#f2f2e8" stroke-width=".7"/><rect x="279.1" y="153.3" width="9.700" height="9.300" fill="url(#sg2)"/><path d="M281.90000000000003 155.6l2.200.9 2.200-1.700v5.200l-2.200 1.600-2.200-1.600z" fill="none" stroke="#f2f2e8" stroke-width=".7"/><path d="M8.500 168h6.500" stroke="#a8a8a8" stroke-width=".7"/><path d="M16.600 163.7h4.600l1.800 1.800v6.800h-6.400z" fill="#fff" stroke="#9a9a9a" stroke-width=".6"/><path d="M17.800 166.4l2.200-.8 2 1.600-.4 2.600-2 .6-1.200-1.400z" fill="#d0203a"/><rect x="259.3" y="163.3" width="9.700" height="9.300" fill="url(#sg0)"/><path d="M262.5 165.4h4v5.200h-4 M261.3 168h3.500 M263.6 166.7l1.300 1.300-1.300 1.300" fill="none" stroke="#f2f2e8" stroke-width=".7"/><rect x="269.2" y="163.3" width="9.700" height="9.300" fill="url(#sg1)"/><rect x="271.8" y="165.4" width="4.800" height="5.200" fill="none" stroke="#f2f2e8" stroke-width=".7"/><path d="M273.2 167h2.200 M273.2 169h2.200" stroke="#f2f2e8" stroke-width=".7"/><rect x="279.1" y="163.3" width="9.700" height="9.300" fill="url(#sg2)"/><path d="M281.90000000000003 165.6l2.200.9 2.200-1.700v5.200l-2.200 1.600-2.200-1.600z" fill="none" stroke="#f2f2e8" stroke-width=".7"/><path d="M8.500 178h6.500" stroke="#a8a8a8" stroke-width=".7"/><path d="M16.600 173.7h4.600l1.800 1.800v6.800h-6.400z" fill="#fff" stroke="#9a9a9a" stroke-width=".6"/><path d="M17.800 176.4l2.200-.8 2 1.600-.4 2.600-2 .6-1.200-1.400z" fill="#d0203a"/><rect x="259.3" y="173.3" width="9.700" height="9.300" fill="url(#sg0)"/><path d="M262.5 175.4h4v5.200h-4 M261.3 178h3.500 M263.6 176.7l1.300 1.300-1.300 1.300" fill="none" stroke="#f2f2e8" stroke-width=".7"/><rect x="269.2" y="173.3" width="9.700" height="9.300" fill="url(#sg1)"/><rect x="271.8" y="175.4" width="4.800" height="5.200" fill="none" stroke="#f2f2e8" stroke-width=".7"/><path d="M273.2 177h2.200 M273.2 179h2.200" stroke="#f2f2e8" stroke-width=".7"/><rect x="279.1" y="173.3" width="9.700" height="9.300" fill="url(#sg2)"/><path d="M281.90000000000003 175.6l2.200.9 2.200-1.700v5.200l-2.200 1.600-2.200-1.600z" fill="none" stroke="#f2f2e8" stroke-width=".7"/><path d="M8.500 188h6.500" stroke="#a8a8a8" stroke-width=".7"/><path d="M16.600 183.7h4.600l1.800 1.800v6.800h-6.400z" fill="#fff" stroke="#9a9a9a" stroke-width=".6"/><path d="M17.800 186.4l2.200-.8 2 1.600-.4 2.600-2 .6-1.200-1.400z" fill="#d0203a"/><rect x="259.3" y="183.3" width="9.700" height="9.300" fill="url(#sg0)"/><path d="M262.5 185.4h4v5.200h-4 M261.3 188h3.500 M263.6 186.7l1.300 1.300-1.300 1.300" fill="none" stroke="#f2f2e8" stroke-width=".7"/><rect x="269.2" y="183.3" width="9.700" height="9.300" fill="url(#sg1)"/><rect x="271.8" y="185.4" width="4.800" height="5.200" fill="none" stroke="#f2f2e8" stroke-width=".7"/><path d="M273.2 187h2.200 M273.2 189h2.200" stroke="#f2f2e8" stroke-width=".7"/><rect x="279.1" y="183.3" width="9.700" height="9.300" fill="url(#sg2)"/><path d="M281.90000000000003 185.6l2.200.9 2.200-1.700v5.200l-2.200 1.600-2.200-1.600z" fill="none" stroke="#f2f2e8" stroke-width=".7"/><path d="M8.500 198h6.500" stroke="#a8a8a8" stroke-width=".7"/><path d="M16.600 193.7h4.600l1.800 1.800v6.800h-6.400z" fill="#fff" stroke="#9a9a9a" stroke-width=".6"/><path d="M17.800 196.4l2.200-.8 2 1.600-.4 2.600-2 .6-1.200-1.400z" fill="#d0203a"/><rect x="259.3" y="193.3" width="9.700" height="9.300" fill="url(#sg0)"/><path d="M262.5 195.4h4v5.200h-4 M261.3 198h3.500 M263.6 196.7l1.300 1.300-1.300 1.300" fill="none" stroke="#f2f2e8" stroke-width=".7"/><rect x="269.2" y="193.3" width="9.700" height="9.300" fill="url(#sg1)"/><rect x="271.8" y="195.4" width="4.800" height="5.200" fill="none" stroke="#f2f2e8" stroke-width=".7"/><path d="M273.2 197h2.200 M273.2 199h2.200" stroke="#f2f2e8" stroke-width=".7"/><rect x="279.1" y="193.3" width="9.700" height="9.300" fill="url(#sg2)"/><path d="M281.90000000000003 195.6l2.200.9 2.200-1.700v5.200l-2.200 1.600-2.200-1.600z" fill="none" stroke="#f2f2e8" stroke-width=".7"/><path d="M8.500 208h6.500" stroke="#a8a8a8" stroke-width=".7"/><path d="M16.600 203.7h4.600l1.800 1.800v6.800h-6.400z" fill="#fff" stroke="#9a9a9a" stroke-width=".6"/><path d="M17.800 206.4l2.200-.8 2 1.600-.4 2.600-2 .6-1.200-1.400z" fill="#d0203a"/><rect x="259.3" y="203.3" width="9.700" height="9.300" fill="url(#sg0)"/><path d="M262.5 205.4h4v5.200h-4 M261.3 208h3.500 M263.6 206.7l1.300 1.300-1.300 1.300" fill="none" stroke="#f2f2e8" stroke-width=".7"/><rect x="269.2" y="203.3" width="9.700" height="9.300" fill="url(#sg1)"/><rect x="271.8" y="205.4" width="4.800" height="5.200" fill="none" stroke="#f2f2e8" stroke-width=".7"/><path d="M273.2 207h2.200 M273.2 209h2.200" stroke="#f2f2e8" stroke-width=".7"/><rect x="279.1" y="203.3" width="9.700" height="9.300" fill="url(#sg2)"/><path d="M281.90000000000003 205.6l2.200.9 2.200-1.700v5.200l-2.200 1.600-2.200-1.600z" fill="none" stroke="#f2f2e8" stroke-width=".7"/><path d="M8.500 218h6.500" stroke="#a8a8a8" stroke-width=".7"/><path d="M16.600 213.7h4.600l1.800 1.800v6.800h-6.400z" fill="#fff" stroke="#9a9a9a" stroke-width=".6"/><path d="M17.800 216.4l2.200-.8 2 1.600-.4 2.600-2 .6-1.200-1.400z" fill="#d0203a"/><rect x="259.3" y="213.3" width="9.700" height="9.300" fill="url(#sg0)"/><path d="M262.5 215.4h4v5.200h-4 M261.3 218h3.500 M263.6 216.7l1.300 1.300-1.300 1.300" fill="none" stroke="#f2f2e8" stroke-width=".7"/><rect x="269.2" y="213.3" width="9.700" height="9.300" fill="url(#sg1)"/><rect x="271.8" y="215.4" width="4.800" height="5.200" fill="none" stroke="#f2f2e8" stroke-width=".7"/><path d="M273.2 217h2.200 M273.2 219h2.200" stroke="#f2f2e8" stroke-width=".7"/><rect x="279.1" y="213.3" width="9.700" height="9.300" fill="url(#sg2)"/><path d="M281.90000000000003 215.6l2.200.9 2.200-1.700v5.200l-2.200 1.600-2.200-1.600z" fill="none" stroke="#f2f2e8" stroke-width=".7"/><path d="M8.500 228h6.500" stroke="#a8a8a8" stroke-width=".7"/><path d="M16.600 223.7h4.600l1.800 1.800v6.800h-6.400z" fill="#fff" stroke="#9a9a9a" stroke-width=".6"/><path d="M17.800 226.4l2.200-.8 2 1.600-.4 2.600-2 .6-1.200-1.400z" fill="#d0203a"/><rect x="259.8" y="223.7" width="8.800" height="8.600" rx="1" fill="#fff" stroke="#15901f" stroke-width=".9"/><path d="M262.5 225.4h4v5.200h-4 M261.3 228h3.500 M263.6 226.7l1.300 1.300-1.300 1.300" fill="none" stroke="#15901f" stroke-width=".7"/><rect x="265.3" y="229" width="3.900" height="3.900" fill="#d81818"/><path d="M266.3 230l1.900 1.900m0-1.900l-1.900 1.900" stroke="#fff" stroke-width=".6"/><rect x="269.7" y="223.7" width="8.800" height="8.600" rx="1" fill="#fff" stroke="#c88c12" stroke-width=".9"/><rect x="271.8" y="225.4" width="4.800" height="5.200" fill="none" stroke="#c88c12" stroke-width=".7"/><path d="M273.2 227h2.200 M273.2 229h2.200" stroke="#c88c12" stroke-width=".7"/><rect x="275.2" y="229" width="3.900" height="3.900" fill="#d81818"/><path d="M276.2 230l1.900 1.900m0-1.900l-1.900 1.900" stroke="#fff" stroke-width=".6"/><rect x="279.6" y="223.7" width="8.800" height="8.600" rx="1" fill="#fff" stroke="#a83236" stroke-width=".9"/><path d="M281.90000000000003 225.6l2.200.9 2.200-1.700v5.200l-2.200 1.600-2.200-1.600z" fill="none" stroke="#a83236" stroke-width=".7"/><rect x="285.1" y="229" width="3.900" height="3.900" fill="#d81818"/><path d="M286.1 230l1.900 1.900m0-1.900l-1.900 1.900" stroke="#fff" stroke-width=".6"/></svg>
<div class="r" style="left:1.8px;top:321.8px;width:288px;height:198.5px;background:#fff;box-sizing:border-box;border:1px solid #8a8a8a;border-right-color:#e0e0e0;border-bottom-color:#e0e0e0;"></div>
<div class="r" style="left:280px;top:323px;width:9.4px;height:197px;background:#f0f0f0;"></div>
<div class="r" style="left:280px;top:374.5px;width:9.4px;height:65px;background:#c9c9c9;"></div>
<svg style="left:280px;top:323px" width="10" height="198" viewBox="0 0 10 198"><path d="M2.600 6.800l2.200-2.300 2.200 2.300 M2.600 188.500l2.200 2.300 2.200-2.300" fill="none" stroke="#555" stroke-width="1"/></svg>
<div class="r" style="left:4.4px;top:413.2px;width:274.4px;height:9.7px;background:linear-gradient(#f2f4f9,#e6e9f1);"></div>
<svg style="left:0;top:322px" width="290" height="198" viewBox="0 322 290 198"><path d="M4.300 326.300h5.800l-2.900 3.600z M16.200 336.300h5.800l-2.900 3.600z" fill="#9a9a9a"/><path d="M13 326.500l3-2.500 2.500 1 1.500-1.500 2 1 1 5-3 3.500-3-.5z" fill="#38b838" stroke="#1a7a1a" stroke-width=".5"/><path d="M15 327l5 4" stroke="#f0d020" stroke-width="1.200"/><path d="M16.500 329.500l2 2" stroke="#e04020" stroke-width=".9"/><path d="M25.500 341.600v-6.800h2.800l.9 1h4.300v1.600" fill="#f6d050" stroke="#c8960c" stroke-width=".6"/><path d="M25.500 341.600l2-4h7.600l-2.400 4z" fill="#f4c430" stroke="#c8960c" stroke-width=".6"/><rect x="28.800" y="344.3" width="7" height="7" fill="#fff" stroke="#7c7c7c" stroke-width=".6"/><rect x="28.800" y="354.3" width="7" height="7" fill="#fff" stroke="#7c7c7c" stroke-width=".6"/><rect x="28.800" y="364.3" width="7" height="7" fill="#fff" stroke="#7c7c7c" stroke-width=".6"/><rect x="28.800" y="374.3" width="7" height="7" fill="#fff" stroke="#7c7c7c" stroke-width=".6"/><rect x="28.800" y="384.3" width="7" height="7" fill="#fff" stroke="#7c7c7c" stroke-width=".6"/><rect x="28.800" y="394.3" width="7" height="7" fill="#fff" stroke="#7c7c7c" stroke-width=".6"/><rect x="28.800" y="404.3" width="7" height="7" fill="#fff" stroke="#7c7c7c" stroke-width=".6"/><rect x="28.800" y="414.3" width="7" height="7" fill="#fff" stroke="#7c7c7c" stroke-width=".6"/><path d="M30.300 417.7l1.600 1.800 2.800-3.600" fill="none" stroke="#111" stroke-width="1"/><rect x="28.800" y="424.3" width="7" height="7" fill="#fff" stroke="#7c7c7c" stroke-width=".6"/><rect x="28.800" y="434.3" width="7" height="7" fill="#fff" stroke="#7c7c7c" stroke-width=".6"/><rect x="28.800" y="444.3" width="7" height="7" fill="#fff" stroke="#7c7c7c" stroke-width=".6"/><rect x="28.800" y="454.3" width="7" height="7" fill="#fff" stroke="#7c7c7c" stroke-width=".6"/><rect x="28.800" y="464.3" width="7" height="7" fill="#fff" stroke="#7c7c7c" stroke-width=".6"/><rect x="28.800" y="474.3" width="7" height="7" fill="#fff" stroke="#7c7c7c" stroke-width=".6"/><rect x="28.800" y="484.3" width="7" height="7" fill="#fff" stroke="#7c7c7c" stroke-width=".6"/><rect x="28.800" y="494.3" width="7" height="7" fill="#fff" stroke="#7c7c7c" stroke-width=".6"/><rect x="28.800" y="504.3" width="7" height="7" fill="#fff" stroke="#7c7c7c" stroke-width=".6"/><rect x="28.800" y="514.3" width="7" height="7" fill="#fff" stroke="#7c7c7c" stroke-width=".6"/></svg>
<span class="t" style="left:26.00px;top:324.67px;font-size:7px;color:#000;transform:scaleX(0.935);">Résultats</span>
<span class="t" style="left:39.00px;top:334.67px;font-size:7px;color:#000;transform:scaleX(0.935);">Ecoulement</span>
<div class="r" style="left:3px;top:343px;width:277px;height:176.800px;overflow:hidden;">
<span class="t" style="left:38.50px;top:1.67px;font-size:7px;color:#000;transform:scaleX(0.935);">Temps de remplissage</span>
<span class="t" style="left:38.50px;top:11.67px;font-size:7px;color:#000;transform:scaleX(0.935);">Pression à la commutation V/P</span>
<span class="t" style="left:38.50px;top:21.67px;font-size:7px;color:#000;transform:scaleX(0.935);">Température au front d'écoulement</span>
<span class="t" style="left:38.50px;top:31.67px;font-size:7px;color:#000;transform:scaleX(0.935);">Pression au point d'injection:Cartographie XY</span>
<span class="t" style="left:38.50px;top:41.67px;font-size:7px;color:#000;transform:scaleX(0.935);">Force de fermeture:Cartographie XY</span>
<span class="t" style="left:38.50px;top:51.67px;font-size:7px;color:#000;transform:scaleX(0.935);">Densité</span>
<span class="t" style="left:38.50px;top:61.67px;font-size:7px;color:#000;transform:scaleX(0.935);">Taux d'extension</span>
<span class="t" style="left:38.50px;top:71.61px;font-size:7.2px;color:#000;font-weight:bold;transform:scaleX(1.028);">Temps pour atteindre la température d'éjection</span>
<span class="t" style="left:38.50px;top:81.67px;font-size:7px;color:#000;transform:scaleX(0.935);">Remplissage par seuil</span>
<span class="t" style="left:38.50px;top:91.67px;font-size:7px;color:#000;transform:scaleX(0.935);">Pression</span>
<span class="t" style="left:38.50px;top:101.67px;font-size:7px;color:#000;transform:scaleX(0.935);">Pression:Cartographie XY</span>
<span class="t" style="left:38.50px;top:111.67px;font-size:7px;color:#000;transform:scaleX(0.935);">Pression en fin de remplissage</span>
<span class="t" style="left:38.50px;top:121.67px;font-size:7px;color:#000;transform:scaleX(0.935);">Vitesse du piston, recommandée:Cartographie XY</span>
<span class="t" style="left:38.50px;top:131.67px;font-size:7px;color:#000;transform:scaleX(0.935);">Taux de cisaillement</span>
<span class="t" style="left:38.50px;top:141.67px;font-size:7px;color:#000;transform:scaleX(0.935);">Taux de cisaillement, maximum</span>
<span class="t" style="left:38.50px;top:151.67px;font-size:7px;color:#000;transform:scaleX(0.935);">Contrainte de cisaillement en paroi</span>
<span class="t" style="left:38.50px;top:161.67px;font-size:7px;color:#000;transform:scaleX(0.935);">Température</span>
<span class="t" style="left:38.50px;top:171.67px;font-size:7px;color:#000;transform:scaleX(0.935);">Vitesse</span>
</div>
<div class="r" style="left:2.8px;top:519.3px;width:286px;height:1px;background:#fff;"></div>
<div class="r" style="left:0px;top:524.3px;width:294px;height:1px;background:#b2b2b2;"></div>
<div class="r" style="left:2px;top:529.6px;width:279px;height:0.9px;background:#c0c0c0;"></div>
<div class="r" style="left:2px;top:530.5px;width:279px;height:0.8px;background:#fcfcfc;"></div>
<div class="r" style="left:2px;top:532.5px;width:279px;height:0.9px;background:#c0c0c0;"></div>
<div class="r" style="left:2px;top:533.4px;width:279px;height:0.8px;background:#fcfcfc;"></div>
<svg style="left:282.500px;top:528px" width="7" height="7" viewBox="0 0 7 7"><rect x="0" y="0" width="6.600" height="6.400" fill="#fdfdfd"/><path d="M0 6.400h6.600v-6.400" fill="none" stroke="#8a8a8a" stroke-width=".7"/><path d="M1.600 1.500L4.800 4.700M4.800 1.500L1.600 4.700" stroke="#000" stroke-width="1.100" fill="none"/></svg>
<svg style="left:0;top:536px" width="140" height="17" viewBox="0 536 140 17"><rect x="2.3" y="537.500" width="13.200" height="13.800" fill="#e9e9e9" stroke="#c2c2c2" stroke-width=".6"/><rect x="17.3" y="537.500" width="13.200" height="13.800" fill="#e9e9e9" stroke="#c2c2c2" stroke-width=".6"/><rect x="32.3" y="537.500" width="13.200" height="13.800" fill="#dcdcdc" stroke="#c2c2c2" stroke-width=".6"/><rect x="47.3" y="537.500" width="13.200" height="13.800" fill="#dcdcdc" stroke="#c2c2c2" stroke-width=".6"/><rect x="62.3" y="537.500" width="13.200" height="13.800" fill="#dcdcdc" stroke="#c2c2c2" stroke-width=".6"/><rect x="77.3" y="537.500" width="13.200" height="13.800" fill="#e9e9e9" stroke="#c2c2c2" stroke-width=".6"/><rect x="92.3" y="537.500" width="13.200" height="13.800" fill="#dcdcdc" stroke="#c2c2c2" stroke-width=".6"/><rect x="107.3" y="537.500" width="13.200" height="13.800" fill="#dcdcdc" stroke="#c2c2c2" stroke-width=".6"/><rect x="122.3" y="537.500" width="13.200" height="13.800" fill="#e9e9e9" stroke="#c2c2c2" stroke-width=".6"/><rect x="5.500" y="541" width="7" height="7.500" rx="1" fill="#e8f0ff" stroke="#2a5ab8" stroke-width="1"/><path d="M8 547l3-4" stroke="#2a5ab8" stroke-width=".8"/><circle cx="5" cy="540.500" r="1.600" fill="#f8c020"/><path d="M20.300 547.800v-6.800h3l.8 1h3.700v5.800z" fill="#f8c828" stroke="#b88a10" stroke-width=".7"/><path d="M35 544l2 3 4.500-6 M36.500 542l1.500 3" fill="none" stroke="#8a8a8a" stroke-width="1"/><path d="M50 548l4-4.500 M53 541.500l3-1.500 1.500 2.500-2.500 1.800z" fill="#eee" stroke="#8a8a8a" stroke-width=".9"/><path d="M65 541l8 7m0-7l-8 7 M69 541v3" fill="none" stroke="#7a7a7a" stroke-width="1"/><rect x="80.300" y="540.500" width="8.400" height="8.300" fill="#dce8fa" stroke="#3a62b8" stroke-width=".8"/><rect x="81" y="541.200" width="2.600" height="7" fill="#3a72d0"/><rect x="85" y="543" width="2.400" height="4" fill="#e87820"/><rect x="95.500" y="541" width="7.500" height="7" fill="#fbfbfb" stroke="#ccc" stroke-width=".4"/><path d="M97 546h4.500l-2.250-2.800z" fill="#9a9a9a"/><path d="M110 540.500l4 3 4-3 M110.500 545.500h7 M114 546.500v2.500" fill="none" stroke="#9a9a9a" stroke-width=".9"/><rect x="125" y="540.500" width="8.500" height="8.300" fill="#dce8fa" stroke="#3a62b8" stroke-width=".8"/><path d="M127.300 542.800l4.200 4.200m0-4.200l-4.200 4.200" stroke="#e02020" stroke-width="1.400"/></svg>
<div class="r" style="left:1.5px;top:555.3px;width:288.3px;height:153.3px;background:#fff;box-sizing:border-box;border:1px solid #8a8a8a;border-right-color:#dcdcdc;border-bottom-color:#cfcfcf;"></div>
<div class="r" style="left:3.5px;top:556.6px;width:42.2px;height:9.7px;background:#dadada;"></div>
<svg style="left:0;top:555px" width="200" height="90" viewBox="0 555 200 90"><path d="M5 559l2-1.500h7l-2 1.500z M5 561.500l2-1.500h7l-2 1.500z M5 564l2-1.500h7l-2 1.500z" fill="#f4f4f4" stroke="#333" stroke-width=".6"/><path d="M9.500 566.500v5h7 M9.500 581.300h7 M21 586v5.300h7 M9.500 601.300h7 M21 606v5.300h7 M9.500 621.300h7 M21 626v5.300h7" fill="none" stroke="#b0b0b0" stroke-width=".7"/><rect x="17.2" y="566.95" width="8.300" height="8.300" fill="#fff" stroke="#222" stroke-width=".9"/><path d="M19.0 571.25l1.900 2.200 3-4.400" fill="none" stroke="#1818e0" stroke-width="1.200"/><path d="M27 573.55l2.200-4.600h7l-2.200 4.600z" fill="#8ab4f4" stroke="#4a7ad8" stroke-width=".6"/><path d="M6 580.05l2.500 2.500 2.500-2.500" fill="none" stroke="#333" stroke-width=".8"/><rect x="17.2" y="576.95" width="8.300" height="8.300" fill="#fff" stroke="#222" stroke-width=".9"/><path d="M19.0 581.25l1.900 2.200 3-4.400" fill="none" stroke="#1818e0" stroke-width="1.200"/><path d="M27.3 584.75v-6.500h2.800l.8 1h4.200v5.500z" fill="#f8cc38" stroke="#b88a10" stroke-width=".6"/><path d="M6 600.05l2.500 2.500 2.500-2.500" fill="none" stroke="#333" stroke-width=".8"/><rect x="17.2" y="596.95" width="8.300" height="8.300" fill="#fff" stroke="#222" stroke-width=".9"/><path d="M19.0 601.25l1.900 2.200 3-4.400" fill="none" stroke="#1818e0" stroke-width="1.200"/><path d="M27.3 604.75v-6.500h2.800l.8 1h4.200v5.500z" fill="#f8cc38" stroke="#b88a10" stroke-width=".6"/><path d="M6 620.05l2.500 2.500 2.500-2.500" fill="none" stroke="#333" stroke-width=".8"/><rect x="17.2" y="616.95" width="8.300" height="8.300" fill="#fff" stroke="#222" stroke-width=".9"/><path d="M19.0 621.25l1.900 2.200 3-4.400" fill="none" stroke="#1818e0" stroke-width="1.200"/><path d="M27.3 624.75v-6.500h2.800l.8 1h4.200v5.500z" fill="#f8cc38" stroke="#b88a10" stroke-width=".6"/><rect x="28.8" y="586.95" width="8.300" height="8.300" fill="#fff" stroke="#222" stroke-width=".9"/><path d="M30.6 591.25l1.900 2.200 3-4.400" fill="none" stroke="#1818e0" stroke-width="1.200"/><path d="M38.8 593.55l2.200-4.600h7l-2.200 4.600z" fill="#8ab4f4" stroke="#4a7ad8" stroke-width=".6"/><rect x="28.8" y="606.95" width="8.300" height="8.300" fill="#fff" stroke="#222" stroke-width=".9"/><path d="M30.6 611.25l1.900 2.200 3-4.400" fill="none" stroke="#1818e0" stroke-width="1.200"/><path d="M38.8 613.55l2.200-4.600h7l-2.200 4.600z" fill="#8ab4f4" stroke="#4a7ad8" stroke-width=".6"/><rect x="28.8" y="626.95" width="8.300" height="8.300" fill="#fff" stroke="#222" stroke-width=".9"/><path d="M30.6 631.25l1.900 2.200 3-4.400" fill="none" stroke="#1818e0" stroke-width="1.200"/><path d="M38.8 633.55l2.200-4.600h7l-2.200 4.600z" fill="#8ab4f4" stroke="#4a7ad8" stroke-width=".6"/></svg>
<span class="t" style="left:16.90px;top:557.81px;font-size:7.2px;color:#000;transform:scaleX(0.936);">Couches</span>
<span class="t" style="left:39.00px;top:567.81px;font-size:7.2px;color:#000;transform:scaleX(0.923);">Couche par défaut</span>
<span class="t" style="left:39.00px;top:577.81px;font-size:7.2px;color:#000;transform:scaleX(0.893);">Géométrie de CAO</span>
<span class="t" style="left:51.50px;top:587.81px;font-size:7.2px;color:#000;transform:scaleX(0.897);">P4Pmold_Part_Sprue</span>
<span class="t" style="left:39.00px;top:597.81px;font-size:7.2px;color:#000;transform:scaleX(0.911);">Noeuds de maillage</span>
<span class="t" style="left:51.50px;top:607.81px;font-size:7.2px;color:#000;transform:scaleX(0.907);">P4Pmold_Part_Sprue Noeuds</span>
<span class="t" style="left:39.00px;top:617.81px;font-size:7.2px;color:#000;transform:scaleX(0.901);">Eléments de maillage</span>
<span class="t" style="left:51.50px;top:627.64px;font-size:7.4px;color:#000;font-weight:bold;transform:scaleX(0.995);">P4Pmold_Part_Sprue Tétras</span>
<div class="r" style="left:0px;top:710.2px;width:1200px;height:14.8px;background:linear-gradient(#b2b2b2,#e6e6e6 10%,#d9d9d9 50%,#c7c7c7);"></div>
<span class="t" style="left:0.50px;top:714.07px;font-size:7.6px;color:#222;transform:scaleX(0.897);">Prêt</span>
<div class="r" style="left:1048px;top:711px;width:0.8px;height:14px;background:#b8b8b8;"></div>
<div class="r" style="left:1048.8px;top:711px;width:0.8px;height:14px;background:#f4f4f4;"></div>
<svg style="left:1000px;top:712px" width="10" height="11" viewBox="0 0 10 11"><rect x=".5" y="1" width="7.500" height="8.500" fill="#f4f6fa" stroke="#556" stroke-width=".6"/><rect x=".5" y="1" width="7.500" height="2" fill="#6a86b8"/><path d="M2 5h4.500 M2 7h4.500" stroke="#667" stroke-width=".6"/><circle cx="7.800" cy="2.200" r="1.500" fill="#9ac0f0"/></svg>
<span class="t" style="left:1011.70px;top:714.04px;font-size:7.4px;color:#222;transform:scaleX(0.953);">Journaux</span>
<span class="t" style="left:1052.00px;top:713.95px;font-size:7.5px;color:#222;">Moulage par injection des thermoplastiques</span>
<div class="r" style="left:297px;top:88.6px;width:903px;height:605.5px;background:#fff;"></div>
<div class="r" style="left:295px;top:87.8px;width:905px;height:1.1px;background:#979797;"></div>
<div class="r" style="left:1197.6px;top:89.5px;width:2.4px;height:604px;background:#ededed;"></div>
<div class="r" style="left:297.5px;top:689.5px;width:902.5px;height:4.5px;background:#efefef;"></div>
<svg style="left:0;top:0" width="1200" height="725" viewBox="0 0 1200 725"><defs><linearGradient id="gpl" x1="0" y1="0.200" x2="1" y2="0.500"><stop offset="0" stop-color="#18c0ce"/><stop offset=".4" stop-color="#17bdcb"/><stop offset=".75" stop-color="#17c6d5"/><stop offset="1" stop-color="#16d0e0"/></linearGradient><linearGradient id="grib" x1="0" y1="0" x2="0.08" y2="1"><stop offset="0" stop-color="#18dcea"/><stop offset=".12" stop-color="#15b0bd"/><stop offset=".75" stop-color="#13aab7"/><stop offset="1" stop-color="#16b8c6"/></linearGradient><linearGradient id="gsp" gradientUnits="userSpaceOnUse" x1="955" y1="262" x2="985.500" y2="284.500"><stop offset="0" stop-color="#d8d8d8"/><stop offset=".04" stop-color="#0a4f58"/><stop offset=".16" stop-color="#128f9a"/><stop offset=".4" stop-color="#18aebb"/><stop offset=".62" stop-color="#17a9b5"/><stop offset=".84" stop-color="#118590"/><stop offset=".96" stop-color="#094850"/><stop offset="1" stop-color="#d8d8d8"/></linearGradient><linearGradient id="grun" x1="0" y1="0" x2="0" y2="1"><stop offset="0" stop-color="#11b2c0"/><stop offset=".3" stop-color="#13c8d6"/><stop offset=".56" stop-color="#14e2f2"/><stop offset=".8" stop-color="#11b4c2"/><stop offset="1" stop-color="#0b8490"/></linearGradient><linearGradient id="gcone" x1="0" y1="0" x2="1" y2="0.600"><stop offset="0" stop-color="#a4a408"/><stop offset=".45" stop-color="#d2d210"/><stop offset="1" stop-color="#8e8e04"/></linearGradient><linearGradient id="gleg" x1="0" y1="0" x2="0" y2="1"><stop offset="0" stop-color="#00f0ff"/><stop offset=".45" stop-color="#0090ff"/><stop offset=".85" stop-color="#0008ff"/><stop offset="1" stop-color="#0000fa"/></linearGradient><filter id="b1" x="-10%" y="-10%" width="120%" height="120%"><feGaussianBlur stdDeviation="1.200"/></filter><filter id="b2" x="-20%" y="-20%" width="140%" height="140%"><feGaussianBlur stdDeviation="2.500"/></filter><clipPath id="cpl"><path d="M486 291 Q486.500 277 497 276 L568 282 L640 288.500 L722 298.500 Q735 301 739.500 308 L748 324.500 L753 341 L750.400 349 L745.500 359 L742 379 L743 394 L748 402 L751.700 419 L756.600 431 L759.500 433 L759.500 452 L769 487 L779 509 L793 523 L799.500 539.500 L802.500 559 Q803 571 791 572.500 L680 563.800 L640 561 L579 556 Q556 552 546 536 L538 505.500 L534.300 503 L523 496 L529.300 473 L522 432 L512 400 L509.500 384 L507 383 L493.500 375 L499.500 352 Z"/></clipPath></defs><path d="M478.500 288 Q479 269 499.500 268.600 L640 281 L780 294.700 L891.700 304.600 Q914 307 919 324.400 L926.400 356.700 Q928 372 912 373.800 L835 372 L834 369 L764 361.500 Q749 360 749.500 374 L756.600 400 L761.600 433.700 L769 474.400 L773.600 481 Q780 503 799 508.800 L809.600 511 L871.700 517.200 L943.600 523.400 Q968 526 973.400 544.500 L979.600 574.300 Q982 593 963.500 593 L889 585.500 L887.800 589.200 L792.300 579.300 L760 575.500 L680 573.700 L579 563.800 Q549 562 539 539 L527 474.400 L505.800 400 L493 354 Z" fill="#f0f0f0"/><path d="M792 570 L888 580 L887.800 589.200 L792.300 579.300 Z M889 576 L975 584 Q972 593 963.500 593 L889 585.500Z" fill="#e9e9e9"/><path d="M818.500 300.900 L834.600 369.500 M871.700 517.200 L887.800 588" stroke="#e2e2e2" stroke-width="1.200" fill="none"/><path d="M764 361.500 L834 369 L834 372 L835 372 L912 373.800 Q922 372 925 366 L835 364.500 L764 355 Z" fill="#ebebeb" opacity=".7"/><path d="M770 439 L850 444 L908 452 M851 448 L838 476 M911 456 L894 481" stroke="#efefef" stroke-width="34" stroke-linecap="round" fill="none"/><path d="M770 439 L850 444 L908 452" stroke="#f1f1f1" stroke-width="38" stroke-linecap="round" fill="none"/><g transform="rotate(18 782 332)"><ellipse cx="782" cy="332" rx="14" ry="12.5" fill="#e6e6e6"/><ellipse cx="782" cy="332" rx="13.4" ry="11.9" fill="#f6f6f6"/><ellipse cx="780.7" cy="330.4" rx="11.2" ry="9.5" fill="#fff"/></g><g transform="rotate(18 901.6 339.3)"><ellipse cx="901.6" cy="339.3" rx="12.4" ry="10" fill="#e6e6e6"/><ellipse cx="901.6" cy="339.3" rx="11.8" ry="9.4" fill="#f6f6f6"/><ellipse cx="900.3000000000001" cy="337.7" rx="9.600000000000001" ry="7" fill="#fff"/></g><g transform="rotate(18 834.4 548.2)"><ellipse cx="834.4" cy="548.2" rx="13.6" ry="12" fill="#e6e6e6"/><ellipse cx="834.4" cy="548.2" rx="13.0" ry="11.4" fill="#f6f6f6"/><ellipse cx="833.1" cy="546.6" rx="10.8" ry="9" fill="#fff"/></g><g transform="rotate(18 954.8 558.2)"><ellipse cx="954.8" cy="558.2" rx="12.4" ry="10.6" fill="#e6e6e6"/><ellipse cx="954.8" cy="558.2" rx="11.8" ry="10.0" fill="#f6f6f6"/><ellipse cx="953.5" cy="556.6" rx="9.600000000000001" ry="7.6" fill="#fff"/></g><path d="M486 291 Q486.500 277 497 276 L568 282 L640 288.500 L722 298.500 Q735 301 739.500 308 L748 324.500 L753 341 L750.400 349 L745.500 359 L742 379 L743 394 L748 402 L751.700 419 L756.600 431 L759.500 433 L759.500 452 L769 487 L779 509 L793 523 L799.500 539.500 L802.500 559 Q803 571 791 572.500 L680 563.800 L640 561 L579 556 Q556 552 546 536 L538 505.500 L534.300 503 L523 496 L529.300 473 L522 432 L512 400 L509.500 384 L507 383 L493.500 375 L499.500 352 Z" fill="url(#gpl)" stroke="#0c8490" stroke-width=".8"/><g clip-path="url(#cpl)"><path d="M723 299 L744 395 L760 452 L779 509 L805 560 L810 300 Z" fill="#0f9aa6" opacity=".25"/><path d="M487 292 Q487 278 498 277.500 L640 290 L722 300 Q734 302 739 309" fill="none" stroke="#16dcec" stroke-width="3.200" opacity=".85" filter="url(#b1)"/><path d="M545 536 Q556 552 579 556 L791 572.500 L801 566" fill="none" stroke="#16c6d4" stroke-width="2.500" opacity=".7" filter="url(#b1)"/><path d="M499.500 352 L456 416 L611 433.500 L656 372 Z" fill="#909090" opacity=".18"/><path d="M529.300 473 L484.700 537.500 L643.500 552.600 L686 490.600 Z" fill="#909090" opacity=".18"/><path d="M747 425 L742 440 L748 462 L760 456 L760 430 Z" fill="#909090" opacity=".2"/></g><path d="M494 356 L456 416 L517 423 L509.500 384 L507 383 L493.500 375 Z" fill="#909090" opacity=".13"/><path d="M523 478 L484.700 537.500 L546 543.500 L538 505.500 L534.300 503 L523 496 Z" fill="#909090" opacity=".13"/><path d="M499.500 352 L652 366.600 L658.500 371.500 L626 394 L507 383 L493.500 375 Q492 362 499.500 352Z" fill="url(#grib)"/><path d="M529.300 473 L682 488 L686.500 491 L657 513 L534.300 503 L523 496 Q522 484 529.300 473Z" fill="url(#grib)"/><path d="M499.500 352 L652 366.600 M529.300 473 L682 488" stroke="#18d4e2" stroke-width="1.500" fill="none"/><path d="M652 366.600 L660 368.500 L658.500 372 L650 379 Z M682 488 L690 489.500 L687 493.500 L680 499Z" fill="#14b6c4"/><path d="M657 372.500 L627 394.500 M685.500 492 L657.500 513.500" stroke="#0c808c" stroke-width="1" fill="none"/><ellipse cx="568" cy="313" rx="19" ry="16.500" transform="rotate(22 568 312)" fill="none" stroke="#1cdcec" stroke-width="4" opacity=".6" filter="url(#b2)"/><ellipse cx="686" cy="324" rx="19" ry="16.500" transform="rotate(22 686 323)" fill="none" stroke="#1cdcec" stroke-width="4" opacity=".6" filter="url(#b2)"/><ellipse cx="740" cy="542.4" rx="19" ry="16.500" transform="rotate(22 740 541.4)" fill="none" stroke="#1cdcec" stroke-width="4" opacity=".6" filter="url(#b2)"/><ellipse cx="621" cy="531.3" rx="19" ry="16.500" transform="rotate(22 621 530.3)" fill="none" stroke="#1cdcec" stroke-width="4" opacity=".6" filter="url(#b2)"/><g transform="rotate(30 568 312)"><ellipse cx="568" cy="312" rx="17.400000000000002" ry="14.9" fill="#19cad8"/><ellipse cx="568.5" cy="312.5" rx="16.3" ry="13.8" fill="#35565c"/><ellipse cx="568" cy="312" rx="15.9" ry="13.4" fill="#ececec"/><ellipse cx="567.2" cy="310.8" rx="12.100000000000001" ry="8.8" fill="#fff"/></g><g transform="rotate(30 686 323)"><ellipse cx="686" cy="323" rx="17.400000000000002" ry="14.9" fill="#19cad8"/><ellipse cx="686.5" cy="323.5" rx="16.3" ry="13.8" fill="#35565c"/><ellipse cx="686" cy="323" rx="15.9" ry="13.4" fill="#ececec"/><ellipse cx="685.2" cy="321.8" rx="12.100000000000001" ry="8.8" fill="#fff"/></g><g transform="rotate(30 740 541.4)"><ellipse cx="740" cy="541.4" rx="17.900000000000002" ry="15.7" fill="#19cad8"/><ellipse cx="740.5" cy="541.9" rx="16.8" ry="14.6" fill="#35565c"/><ellipse cx="740" cy="541.4" rx="16.400000000000002" ry="14.2" fill="#ececec"/><ellipse cx="739.2" cy="540.1999999999999" rx="12.600000000000001" ry="9.6" fill="#fff"/></g><g transform="rotate(30 621 530.3)"><ellipse cx="621" cy="530.3" rx="18.1" ry="16.1" fill="#19cad8"/><ellipse cx="621.5" cy="530.8" rx="17" ry="15" fill="#35565c"/><ellipse cx="621" cy="530.3" rx="16.6" ry="14.6" fill="#f3f3f3"/><ellipse cx="620.2" cy="529.0999999999999" rx="12.8" ry="10" fill="#e9e9e9"/></g><path d="M747.500 424 Q753 421 757 428 L761 436 Q766 438 774 428.500 L800 429.500 L852 430.700 L884.400 438 L916.600 443 Q928 446 925 457 L905 485 Q898 491 890.500 487 Q883 482.500 887 476.500 L899 461 L860.600 459.500 L849 477 Q843 485 835 481.500 Q827 478 831 470.500 L841 457 L800 456.300 L769 451.600 Q764 451 760.500 446.500 L759.500 452 Q754 458 749.500 452 Q746 436 747.500 424Z" fill="url(#grun)" stroke="#0a6a76" stroke-width=".8"/><path d="M776 434 L850 437 L905 447" stroke="#18dcea" stroke-width="4" fill="none" opacity=".0" filter="url(#b2)" stroke-linecap="round"/><path d="M860 447 Q852 452 848 462" stroke="#1ce0ee" stroke-width="5" fill="none" opacity=".8" filter="url(#b2)" stroke-linecap="round"/><path d="M836 476 l3 2 M891 482 l3 2" stroke="#1cdcea" stroke-width="4" fill="none" opacity=".8" filter="url(#b1)" stroke-linecap="round"/><path d="M1078.300 121.700 L850.600 430.300 L886.400 439 L1102.800 131.400 Z" fill="#dedede"/><g><path d="M1079.30 122.50L1080.53 122.96L853.64 431.04L851.80 430.60Z" fill="#d7d7d7"/><path d="M1079.86 122.71L1081.08 123.16L854.47 431.24L852.63 430.80Z" fill="#9ea9ab"/><path d="M1080.41 122.92L1081.64 123.37L855.31 431.44L853.47 431.00Z" fill="#06363d"/><path d="M1080.97 123.12L1082.20 123.58L856.14 431.64L854.30 431.20Z" fill="#094c54"/><path d="M1081.53 123.33L1082.76 123.79L856.98 431.84L855.14 431.40Z" fill="#0b606a"/><path d="M1082.09 123.54L1083.31 123.99L857.81 432.04L855.97 431.60Z" fill="#0c6c77"/><path d="M1082.64 123.75L1083.87 124.20L858.65 432.24L856.81 431.80Z" fill="#0d7983"/><path d="M1083.20 123.95L1084.43 124.41L859.48 432.44L857.64 432.00Z" fill="#0e8590"/><path d="M1083.76 124.16L1084.99 124.62L860.32 432.64L858.48 432.20Z" fill="#0f8d98"/><path d="M1084.32 124.37L1085.54 124.82L861.15 432.84L859.31 432.40Z" fill="#10909c"/><path d="M1084.88 124.58L1086.10 125.03L861.99 433.04L860.15 432.60Z" fill="#10949f"/><path d="M1085.43 124.78L1086.66 125.24L862.82 433.24L860.99 432.80Z" fill="#1097a3"/><path d="M1085.99 124.99L1087.22 125.45L863.66 433.44L861.82 433.00Z" fill="#119ba7"/><path d="M1086.55 125.20L1087.77 125.65L864.49 433.64L862.65 433.20Z" fill="#119eaa"/><path d="M1087.11 125.41L1088.33 125.86L865.33 433.84L863.49 433.40Z" fill="#11a1ae"/><path d="M1087.66 125.61L1088.89 126.07L866.16 434.04L864.33 433.60Z" fill="#12a4b1"/><path d="M1088.22 125.82L1089.45 126.28L867.00 434.24L865.16 433.80Z" fill="#12a7b4"/><path d="M1088.78 126.03L1090.00 126.48L867.83 434.44L866.00 434.00Z" fill="#12aab7"/><path d="M1089.34 126.23L1090.56 126.69L868.67 434.64L866.83 434.20Z" fill="#12adba"/><path d="M1089.89 126.44L1091.12 126.90L869.50 434.84L867.66 434.40Z" fill="#13afbc"/><path d="M1090.45 126.65L1091.68 127.11L870.34 435.04L868.50 434.60Z" fill="#13b1be"/><path d="M1091.01 126.86L1092.23 127.31L871.17 435.24L869.34 434.80Z" fill="#13b3c0"/><path d="M1091.56 127.07L1092.79 127.52L872.01 435.44L870.17 435.00Z" fill="#14b5c3"/><path d="M1092.12 127.27L1093.35 127.73L872.84 435.64L871.00 435.20Z" fill="#14b6c3"/><path d="M1092.68 127.48L1093.91 127.94L873.68 435.84L871.84 435.40Z" fill="#14b4c2"/><path d="M1093.24 127.69L1094.46 128.14L874.51 436.04L872.67 435.60Z" fill="#14b2c0"/><path d="M1093.79 127.90L1095.02 128.35L875.35 436.24L873.51 435.80Z" fill="#13b0be"/><path d="M1094.35 128.10L1095.58 128.56L876.18 436.44L874.35 436.00Z" fill="#13afbc"/><path d="M1094.91 128.31L1096.14 128.77L877.02 436.64L875.18 436.20Z" fill="#13abb8"/><path d="M1095.47 128.52L1096.69 128.97L877.85 436.84L876.01 436.40Z" fill="#12a6b2"/><path d="M1096.02 128.73L1097.25 129.18L878.69 437.04L876.85 436.60Z" fill="#11a0ad"/><path d="M1096.58 128.93L1097.81 129.39L879.52 437.24L877.69 436.80Z" fill="#109ba7"/><path d="M1097.14 129.14L1098.37 129.60L880.36 437.44L878.52 437.00Z" fill="#0f929e"/><path d="M1097.70 129.35L1098.92 129.80L881.19 437.64L879.36 437.20Z" fill="#0e8792"/><path d="M1098.25 129.56L1099.48 130.01L882.03 437.84L880.19 437.40Z" fill="#0d7b86"/><path d="M1098.81 129.76L1100.04 130.22L882.86 438.04L881.03 437.60Z" fill="#0b6d77"/><path d="M1099.37 129.97L1100.60 130.43L883.70 438.24L881.86 437.80Z" fill="#095761"/><path d="M1099.93 130.18L1101.15 130.63L884.53 438.44L882.70 438.00Z" fill="#07424c"/><path d="M1100.48 130.39L1101.60 130.80L885.20 438.60L883.53 438.20Z" fill="#05262c"/><path d="M1101.04 130.59L1101.60 130.80L885.20 438.60L884.37 438.40Z" fill="#d3d3d3"/></g><path d="M1080.300 123 Q1083.500 116.800 1092.500 119 Q1101.300 121.800 1101 130.600 L1099.500 130 L1082 123.500Z" fill="#12a0ae"/><path d="M1081 122 Q1085 117.500 1092.500 119.500 Q1100.500 122 1100.500 129.500" fill="none" stroke="#1ce4f4" stroke-width="1.500" filter="url(#b1)"/><path d="M846 433 L884 440 L896 448 L880 456 L846 450 Z" fill="#13bccb" filter="url(#b2)"/><path d="M858 436 L876 446" stroke="#1adcea" stroke-width="5" opacity=".7" filter="url(#b2)"/><path d="M904 374 L912 373.800 Q928 372 926.400 356.700 L920 329 L887 374 Z" fill="#e8f0f0" opacity=".22"/><path d="M1094.800 119 L1100.800 102.500 Q1104.500 99.300 1108.800 101.800 Q1112.600 104.500 1111.800 108.600 L1098.500 120.500 Z" fill="url(#gcone)"/><rect x="325.200" y="152.600" width="12.300" height="266" fill="#e5e5e5"/><rect x="325.200" y="418.200" width="12.300" height="70.800" fill="url(#gleg)"/><path d="M502.7 655.700V662.500H991.5V655.700M572.5 655.700V662.500M642.4 655.700V662.500M712.2 655.700V662.500M782.0 655.700V662.500M851.8 655.700V662.500M921.7 655.700V662.500" fill="none" stroke="#aaa" stroke-width=".9"/><path d="M1139.600 614.800 L1133.300 592.400 M1158.400 631 L1183.500 633.600 M1162 606.800 L1166 600" stroke="#555" stroke-width=".7" fill="none"/><path d="M1139.600 614.800 L1146.800 605 L1162 606.800 L1154.800 617Z" fill="#0a0aa8"/><path d="M1139.600 614.800 L1154.800 617 L1158.400 631 L1142.800 629.200Z" fill="#c40a0a"/><path d="M1154.800 617 L1162 606.800 L1166 619.300 L1158.400 631Z" fill="#0a7a14"/><path d="M1155.300 119.500 L1182 120 L1169.700 136.600 L1141 134.400Z" fill="#ececec"/><path d="M1141 134.400 L1169.700 136.600 L1175.200 163 L1147.600 157Z" fill="#e6e6e6"/><path d="M1169.700 136.600 L1182 120 L1185.500 146 L1175.200 163Z" fill="#f2f2f2"/><path d="M1155.300 119.500 L1182 120 L1169.700 136.600 L1141 134.400Z M1141 134.400 L1147.600 157 L1175.200 163 L1169.700 136.600 M1182 120 L1185.500 146 L1175.200 163" fill="none" stroke="#9c9c9c" stroke-width=".7" stroke-dasharray="3 1.500"/><text transform="translate(1158.300 133.800) rotate(-52) skewX(-8)" font-size="4.900" fill="#858585" font-family="Liberation Sans, sans-serif">DROITE</text><text transform="translate(1151.300 138.200) rotate(71) skewX(8)" font-size="5.100" fill="#808080" font-family="Liberation Sans, sans-serif">ARRIÈRE</text><text transform="translate(1175.600 135.200) rotate(76) scale(1 .7)" font-size="5" fill="#969696" font-family="Liberation Sans, sans-serif">HAUT</text><rect x="1167" y="97.300" width="7.600" height="2.200" rx=".6" fill="#ddd" stroke="#666" stroke-width=".6"/><rect x="1178.300" y="95.300" width="5.400" height="5.400" fill="#eee" stroke="#555" stroke-width=".8"/><path d="M1179.800 95v-1.400h5.400v5.400h-1.400" fill="none" stroke="#555" stroke-width=".8"/><rect x="1180.300" y="97.500" width="1.500" height="3" fill="#555"/><path d="M1189.500 94.500l6 6m0-6l-6 6" stroke="#555" stroke-width="2.200" fill="none"/><path d="M1189.500 94.500l6 6m0-6l-6 6" stroke="#eee" stroke-width=".8" fill="none"/><rect x="1177.200" y="182" width="21" height="206.300" rx="2.500" fill="#f7f7f7" stroke="#b4b4b4" stroke-width=".9"/><rect x="1179" y="236.600" width="17.400" height="17.400" fill="#cfe1f4"/><path d="M1179.500 217h16.500" stroke="#c8c8c8" stroke-width=".7"/><circle cx="1193.800" cy="185.300" r="1.300" fill="#fff" stroke="#999" stroke-width=".6"/><circle cx="1193.800" cy="384.500" r="1.300" fill="#fff" stroke="#999" stroke-width=".6"/><circle cx="1187.4" cy="201" r="6.600" fill="#f0f0f0" stroke="#8a8a8a" stroke-width="1.100"/><circle cx="1187.4" cy="201" r="3.800" fill="#fcfcfc" stroke="#9a9a9a" stroke-width=".9"/><path d="M1185.9 212.800h3l-1.500 1.600z" fill="#666"/><path d="M1184.9 223.500v8.500l2.200-2 1.600 3.200 1.200-.6-1.600-3.100h2.900z" fill="#fafafa" stroke="#8a8a8a" stroke-width=".7"/><ellipse cx="1187.4" cy="245.200" rx="5" ry="2.400" fill="none" stroke="#5a86b8" stroke-width=".8"/><ellipse cx="1187.4" cy="245.200" rx="2.400" ry="5" fill="none" stroke="#5a86b8" stroke-width=".8"/><circle cx="1187.4" cy="245.200" r="1" fill="#3a78c8"/><path d="M1183.9 263.500c0-1 1.200-1 1.500 0v-3.500c0-1 1.300-1 1.300 0v-1c0-1 1.400-1 1.400 0v1c0-1 1.300-1 1.300 0v1c0-1 1.300-.8 1.300.2v4.300c0 2-1.300 3-3.300 3s-3.500-2-3.500-5z" fill="#fafafa" stroke="#8a8a8a" stroke-width=".7"/><circle cx="1186.6000000000001" cy="279.59999999999997" r="3.600" fill="#fafafa" stroke="#8a8a8a" stroke-width=".9"/><path d="M1189.2 282.2l3 3" stroke="#777" stroke-width="1.500"/><path d="M1190.9 275.4v3m-1.500-1.500h3" stroke="#777" stroke-width=".6"/><circle cx="1186.6000000000001" cy="296.7" r="3.600" fill="#fafafa" stroke="#8a8a8a" stroke-width=".9"/><path d="M1189.2 299.3l3 3" stroke="#777" stroke-width="1.500"/><circle cx="1186.6000000000001" cy="296.7" r="2" fill="none" stroke="#aaa" stroke-width=".6"/><circle cx="1186.6000000000001" cy="314.5" r="3.600" fill="#fafafa" stroke="#8a8a8a" stroke-width=".9"/><path d="M1189.2 317.1l3 3" stroke="#777" stroke-width="1.500"/><circle cx="1186.6000000000001" cy="314.5" r="2" fill="none" stroke="#aaa" stroke-width=".6"/><path d="M1187.4 328v10m-5-5h10" stroke="#5a86b8" stroke-width=".9"/><path d="M1182.9 348.300h9" stroke="#aaa" stroke-width=".7"/><rect x="1182.9" y="350.300" width="9" height="2.400" fill="#e8b868"/><rect x="1182.9" y="365.500" width="9" height="6.500" rx="1" fill="#fafafa" stroke="#8a8a8a" stroke-width=".8"/><rect x="1184.6000000000001" y="367.500" width="5.600" height="2.400" fill="none" stroke="#8a8a8a" stroke-width=".6"/><path d="M1184.4 364.300h6" stroke="#999" stroke-width=".6"/></svg>
<span class="t" style="left:324.20px;top:103.88px;font-size:9px;color:#1a1a1a;transform:scaleX(0.994);">Temps pour atteindre la température d'éjection</span>
<span class="t" style="left:327.00px;top:113.98px;font-size:9px;color:#1a1a1a;transform:scaleX(0.965);">= 10.18[s]</span>
<span class="t" style="left:326.40px;top:131.88px;font-size:9px;color:#1a1a1a;transform:scaleX(0.947);">[s]</span>
<span class="t" style="left:338.80px;top:148.78px;font-size:9px;color:#1a1a1a;transform:scaleX(0.995);">48.59</span>
<span class="t" style="left:338.80px;top:232.98px;font-size:9px;color:#1a1a1a;transform:scaleX(0.995);">36.46</span>
<span class="t" style="left:338.80px;top:317.18px;font-size:9px;color:#1a1a1a;transform:scaleX(0.995);">24.33</span>
<span class="t" style="left:339.60px;top:401.38px;font-size:9px;color:#1a1a1a;transform:scaleX(0.910);">12.21</span>
<span class="t" style="left:341.40px;top:485.58px;font-size:9px;color:#1a1a1a;transform:scaleX(0.970);">0.0788</span>
<span class="t" style="left:715.20px;top:672.38px;font-size:9px;color:#1a1a1a;transform:scaleX(0.986);">Echelle (70 mm)</span>
<span class="t" style="left:1179.55px;top:655.58px;font-size:9px;color:#1a1a1a;transform:scaleX(0.980);">-33</span>
<span class="t" style="left:1174.65px;top:665.73px;font-size:9px;color:#1a1a1a;transform:scaleX(0.980);">-147</span>
<span class="t" style="left:1179.55px;top:675.88px;font-size:9px;color:#1a1a1a;transform:scaleX(0.980);">-76</span>
<span class="t" style="left:1137.80px;top:589.47px;font-size:11.5px;color:#111;">X</span>
<span class="t" style="left:1159.80px;top:599.57px;font-size:11.5px;color:#111;">Z</span>
<span class="t" style="left:1177.00px;top:622.87px;font-size:11.5px;color:#111;">Y</span>
<span class="t" style="left:305.00px;top:668.27px;font-size:6.3px;color:#333;transform:scaleX(1.071);letter-spacing:.2px;">AUTODESK</span>
<span class="t" style="left:305.00px;top:676.01px;font-size:6.6px;color:#111;font-weight:bold;transform:scaleX(0.991);">MOLDFLOW</span>
<span class="t" style="left:348.00px;top:676.01px;font-size:6.6px;color:#111;font-weight:bold;transform:scaleX(1.195);">INSIGHT</span>
<span class="t" style="left:342.80px;top:667.96px;font-size:3px;color:#444;">®</span>
<span class="t" style="left:344.00px;top:675.76px;font-size:3px;color:#222;">®</span>
<div class="r" style="left:296.5px;top:694px;width:903.5px;height:15px;background:#f0f0f0;"></div>
<div class="r" style="left:296.5px;top:693.7px;width:903.5px;height:1px;background:#3c3c3c;"></div>
<div class="r" style="left:389px;top:693.5px;width:95.5px;height:15px;background:#fff;"></div>
<span class="t" style="left:309.00px;top:697.87px;font-size:7px;color:#111;transform:scaleX(0.909);">Simulation Community | A...</span>
<span class="t" style="left:401.50px;top:698.07px;font-size:7px;color:#111;transform:scaleX(0.909);">P4P_Kistler_PtIn_Mes...</span>
<div class="r" style="left:473px;top:697px;width:8.3px;height:8.3px;background:#d23a3a;"></div>
<span class="t" style="left:475.30px;top:697.90px;font-size:6.5px;color:#fff;">x</span>
<svg style="left:297px;top:695px" width="110" height="14" viewBox="0 0 110 14"><circle cx="6.300" cy="6.300" r="4.600" fill="#2a78d8"/><path d="M3 4.500c2-2 4-1.500 4.500.5s-2 2-1.500 4-3-1-3-4.500z M8 7.500c1-1 2.500 0 1.500 1.500z" fill="#48b048"/><path d="M95 2h4.500l1.800 1.800v7h-6.300z" fill="#fff" stroke="#9a9a9a" stroke-width=".6"/><path d="M96.200 5l2.200-.8 2 1.600-.4 2.600-2 .6-1.200-1.400z" fill="#d0203a"/></svg>
</body></html>
